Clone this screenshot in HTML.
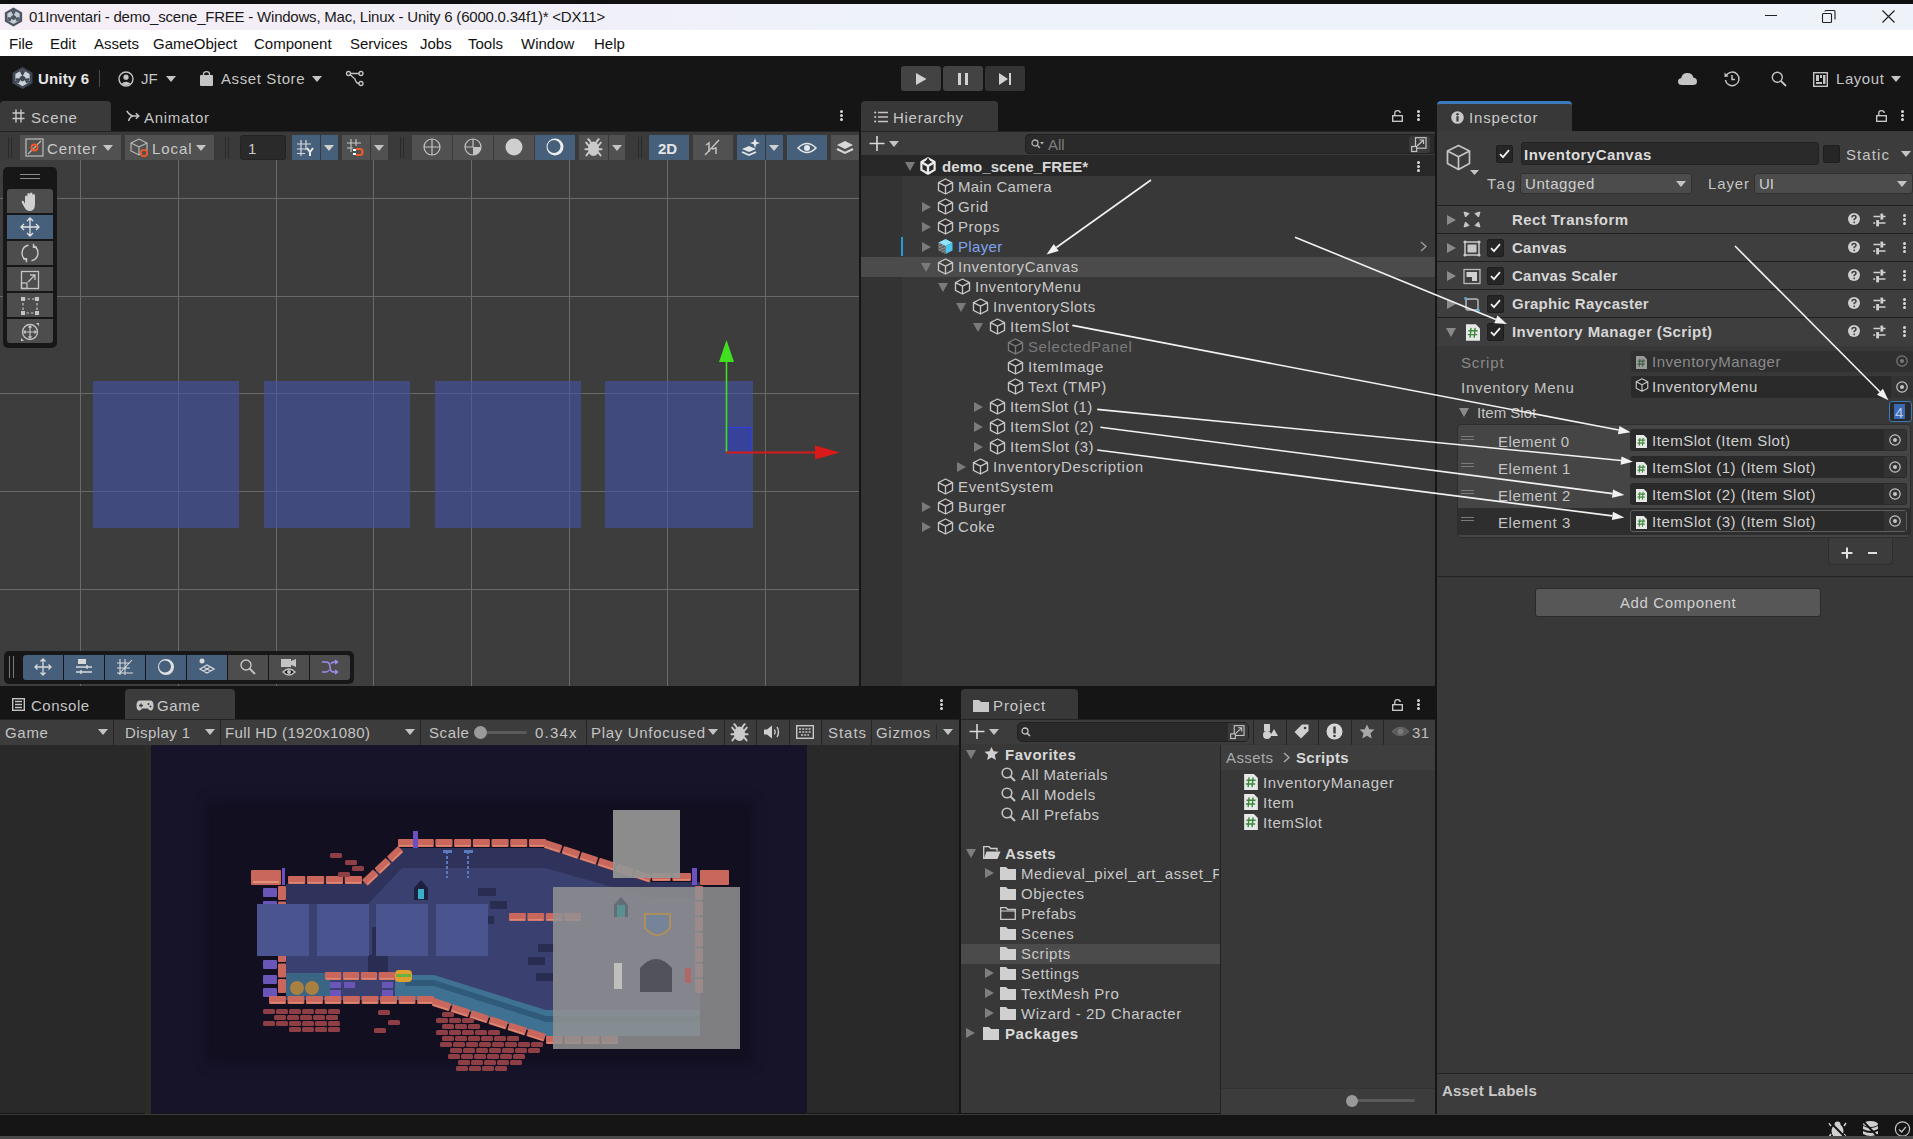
<!DOCTYPE html>
<html><head><meta charset="utf-8">
<style>
*{margin:0;padding:0;box-sizing:border-box}
html,body{width:1913px;height:1139px;overflow:hidden;background:#151515;font-family:"Liberation Sans",sans-serif;}
.a{position:absolute}
.t{position:absolute;white-space:nowrap;color:#c4c4c4;font-size:14px;line-height:16px}
.b{font-weight:bold}
svg{position:absolute;overflow:visible}
</style></head><body>
<!-- top border -->
<div class="a" style="left:0;top:0;width:1913px;height:4px;background:#101010"></div>
<!-- title bar -->
<div class="a" style="left:0;top:4px;width:1913px;height:26px;background:linear-gradient(90deg,#f6eef6 0%,#f2eff7 25%,#eef2fa 45%,#eef3f9 100%)"></div>
<!-- menu bar -->
<div class="a" style="left:0;top:30px;width:1913px;height:26px;background:#ffffff"></div>
<!-- main toolbar -->
<div class="a" style="left:0;top:56px;width:1913px;height:45px;background:#151515"></div>


<!-- title bar content -->
<svg style="left:4px;top:7px" width="19" height="20" viewBox="0 0 20 22"><polygon points="10,0.5 19.5,6 19.5,16 10,21.5 0.5,16 0.5,6" fill="#4c5561"/><path d="M10 3.2 L16.8 7.1 V14.9 L10 18.8 L3.2 14.9 V7.1Z" fill="#c5ccd4"/><path d="M10 3.2 V7.5 M8.2 4.2 L10 7.5 L11.8 4.2 M3.2 14.9 L7 12.4 M3.4 12.2 L7 12.4 L5.6 15.6 M16.8 14.9 L13 12.4 M16.6 12.2 L13 12.4 L14.4 15.6" fill="none" stroke="#4c5561" stroke-width="1.9"/><path d="M10 8.6 L12.6 10.1 V12.9 L10 14.4 L7.4 12.9 V10.1Z" fill="#4c5561"/></svg>
<div class="t" style="left:29px;top:8px;font-size:15px;line-height:17px;letter-spacing:-0.22px;color:#1a1a1a">01Inventari - demo_scene_FREE - Windows, Mac, Linux - Unity 6 (6000.0.34f1)* &lt;DX11&gt;</div>
<div class="a" style="left:1765px;top:15px;width:12px;height:1px;background:#222"></div>
<svg style="left:1822px;top:10px" width="14" height="13" viewBox="0 0 14 13"><rect x="0.5" y="3.5" width="9" height="9" fill="none" stroke="#222" stroke-width="1.1" rx="1"/><path d="M3 1.5 Q3 0.5 4 0.5 L12 0.5 Q13 0.5 13 1.5 L13 9.5" fill="none" stroke="#222" stroke-width="1.1"/></svg>
<svg style="left:1882px;top:10px" width="13" height="13" viewBox="0 0 13 13"><path d="M0.5 0.5 L12.5 12.5 M12.5 0.5 L0.5 12.5" stroke="#222" stroke-width="1.2"/></svg>
<!-- menu -->
<div class="t" style="left:9px;top:35px;font-size:15px;line-height:17px;color:#111">File</div>
<div class="t" style="left:50px;top:35px;font-size:15px;line-height:17px;color:#111">Edit</div>
<div class="t" style="left:94px;top:35px;font-size:15px;line-height:17px;color:#111">Assets</div>
<div class="t" style="left:153px;top:35px;font-size:15px;line-height:17px;color:#111">GameObject</div>
<div class="t" style="left:254px;top:35px;font-size:15px;line-height:17px;color:#111">Component</div>
<div class="t" style="left:350px;top:35px;font-size:15px;line-height:17px;color:#111">Services</div>
<div class="t" style="left:420px;top:35px;font-size:15px;line-height:17px;color:#111">Jobs</div>
<div class="t" style="left:468px;top:35px;font-size:15px;line-height:17px;color:#111">Tools</div>
<div class="t" style="left:521px;top:35px;font-size:15px;line-height:17px;color:#111">Window</div>
<div class="t" style="left:594px;top:35px;font-size:15px;line-height:17px;color:#111">Help</div>
<!-- main toolbar content -->
<svg style="left:12px;top:66px" width="21" height="24" viewBox="0 0 20 22"><polygon points="10,0.5 19.5,6 19.5,16 10,21.5 0.5,16 0.5,6" fill="#3f4852"/><path d="M10 3.2 L16.8 7.1 V14.9 L10 18.8 L3.2 14.9 V7.1Z" fill="#c9d0d8"/><path d="M10 3.2 V7.5 M8.2 4.2 L10 7.5 L11.8 4.2 M3.2 14.9 L7 12.4 M3.4 12.2 L7 12.4 L5.6 15.6 M16.8 14.9 L13 12.4 M16.6 12.2 L13 12.4 L14.4 15.6" fill="none" stroke="#3f4852" stroke-width="1.9"/><path d="M10 8.6 L12.6 10.1 V12.9 L10 14.4 L7.4 12.9 V10.1Z" fill="#3f4852"/></svg>
<div class="t b" style="left:38px;top:70px;font-size:15px;line-height:17px;color:#e6e6e6;letter-spacing:0.17px">Unity 6</div>
<div class="a" style="left:99px;top:70px;width:1px;height:17px;background:#4a4a4a"></div>
<svg style="left:118px;top:71px" width="16" height="16" viewBox="0 0 16 16"><circle cx="8" cy="8" r="7" fill="none" stroke="#c4c4c4" stroke-width="1.4"/><circle cx="8" cy="6.2" r="2.6" fill="#c4c4c4"/><path d="M3.3 12.8 Q8 8.5 12.7 12.8 Q8 16 3.3 12.8Z" fill="#c4c4c4"/></svg>
<div class="t" style="left:141px;top:70px;font-size:15px;line-height:17px;color:#c4c4c4">JF</div>
<svg style="left:166px;top:76px" width="10" height="6" viewBox="0 0 10 6"><polygon points="0,0 10,0 5,6" fill="#c4c4c4"/></svg>
<svg style="left:200px;top:71px" width="13" height="15" viewBox="0 0 13 15"><path d="M3.5 5 L3.5 3 Q3.5 0.7 6.5 0.7 Q9.5 0.7 9.5 3 L9.5 5" fill="none" stroke="#c4c4c4" stroke-width="1.3"/><rect x="0" y="4" width="13" height="11" rx="1" fill="#c4c4c4"/></svg>
<div class="t" style="left:221px;top:70px;font-size:15px;line-height:17px;letter-spacing:0.6px;color:#c4c4c4">Asset Store</div>
<svg style="left:312px;top:76px" width="10" height="6" viewBox="0 0 10 6"><polygon points="0,0 10,0 5,6" fill="#c4c4c4"/></svg>
<svg style="left:346px;top:71px" width="18" height="15" viewBox="0 0 18 15"><circle cx="2.5" cy="2.5" r="2" fill="none" stroke="#c4c4c4" stroke-width="1.3"/><circle cx="15" cy="2.5" r="2" fill="none" stroke="#c4c4c4" stroke-width="1.3"/><circle cx="15" cy="12.5" r="2" fill="none" stroke="#c4c4c4" stroke-width="1.3"/><path d="M4.5 2.5 L13 2.5 M4.2 3.8 L9 8 Q10 12.5 13 12.5" fill="none" stroke="#c4c4c4" stroke-width="1.3"/></svg>
<!-- play controls -->
<div class="a" style="left:901px;top:66px;width:40px;height:25px;background:#434343;border-radius:3px"></div>
<div class="a" style="left:943px;top:66px;width:40px;height:25px;background:#434343;border-radius:3px"></div>
<div class="a" style="left:985px;top:66px;width:40px;height:25px;background:#343434;border-radius:3px"></div>
<svg style="left:916px;top:73px" width="11" height="12" viewBox="0 0 11 12"><polygon points="0,0 10.5,6 0,12" fill="#d0d0d0"/></svg>
<div class="a" style="left:958px;top:73px;width:3px;height:12px;background:#d0d0d0"></div>
<div class="a" style="left:965px;top:73px;width:3px;height:12px;background:#d0d0d0"></div>
<svg style="left:999px;top:73px" width="13" height="12" viewBox="0 0 13 12"><polygon points="0,0 9,6 0,12" fill="#d0d0d0"/><rect x="10" y="0" width="2" height="12" fill="#d0d0d0"/></svg>
<!-- right toolbar icons -->
<svg style="left:1678px;top:72px" width="19" height="13" viewBox="0 0 19 13"><path d="M4 13 Q0 13 0 9.5 Q0 6.5 3.2 6.2 Q4 1 9.5 1 Q14.5 1 15.3 5.5 Q19 6 19 9.5 Q19 13 15 13 Z" fill="#c4c4c4"/></svg>
<svg style="left:1724px;top:71px" width="16" height="16" viewBox="0 0 16 16"><path d="M2.3 4.5 A6.8 6.8 0 1 1 1.5 9" fill="none" stroke="#c4c4c4" stroke-width="1.4"/><polygon points="0.5,1.5 4.5,5.5 0.5,6" fill="#c4c4c4"/><path d="M8 4 L8 8.5 L11 8.5" fill="none" stroke="#c4c4c4" stroke-width="1.5"/></svg>
<svg style="left:1771px;top:71px" width="16" height="16" viewBox="0 0 16 16"><circle cx="6.3" cy="6.3" r="5" fill="none" stroke="#c4c4c4" stroke-width="1.4"/><path d="M10 10 L15 15" stroke="#c4c4c4" stroke-width="1.8"/></svg>
<svg style="left:1813px;top:72px" width="15" height="15" viewBox="0 0 15 15"><rect x="0.7" y="0.7" width="13.6" height="13.6" fill="none" stroke="#c4c4c4" stroke-width="1.4"/><rect x="3" y="3" width="3" height="6" fill="#c4c4c4"/><rect x="7" y="3" width="2" height="3" fill="#c4c4c4"/><rect x="10" y="3" width="2.5" height="9" fill="#c4c4c4"/><rect x="3" y="10" width="6" height="2" fill="#c4c4c4"/></svg>
<div class="t" style="left:1836px;top:70px;font-size:15px;line-height:17px;letter-spacing:0.56px;color:#c4c4c4">Layout</div>
<svg style="left:1891px;top:76px" width="10" height="6" viewBox="0 0 10 6"><polygon points="0,0 10,0 5,6" fill="#c4c4c4"/></svg>

<!-- SCENE PANEL -->
<div id="scene" class="a" style="left:0;top:101px;width:859px;height:585px;background:#151515">
  <div class="a" style="left:0;top:0;width:111px;height:30px;background:#3a3a3a;border-radius:4px 4px 0 0"></div>
  <div class="a" style="left:0;top:30px;width:859px;height:29px;background:#3a3a3a"></div>
  <div class="a" style="left:0;top:59px;width:859px;height:526px;background:#3d3d3d"></div>
</div>

<!-- scene content -->
<svg style="left:12px;top:109px" width="13" height="14" viewBox="0 0 13 14"><path d="M4 0.5 V13.5 M9 0.5 V13.5 M0.5 4 H12.5 M0.5 9.5 H12.5" stroke="#c8c8c8" stroke-width="1.4"/></svg>
<div class="t" style="left:31px;top:109px;font-size:15px;letter-spacing:0.85px;color:#c8c8c8;line-height:17px">Scene</div>
<svg style="left:126px;top:110px" width="14" height="12" viewBox="0 0 14 12"><path d="M0.8 1 Q4 5.5 7 6 L12.5 6 M9.8 3.2 L12.8 6 L9.8 8.8 M7 6 Q4 6.5 2.5 11" fill="none" stroke="#c4c4c4" stroke-width="1.5"/></svg>
<div class="t" style="left:144px;top:109px;font-size:15px;letter-spacing:0.71px;color:#c4c4c4;line-height:17px">Animator</div>
<div class="a" style="left:840px;top:110px;width:3px;height:3px;border-radius:2px;background:#d8d8d8"></div><div class="a" style="left:840px;top:114px;width:3px;height:3px;border-radius:2px;background:#d8d8d8"></div><div class="a" style="left:840px;top:118px;width:3px;height:3px;border-radius:2px;background:#d8d8d8"></div>
<div class="a" style="left:0;top:131px;width:859px;height:1px;background:#232323"></div>
<div class="a" style="left:8px;top:137px;width:1px;height:21px;background:#2a2a2a"></div><div class="a" style="left:11px;top:137px;width:1px;height:21px;background:#2a2a2a"></div>
<div class="a" style="left:225px;top:137px;width:1px;height:21px;background:#2a2a2a"></div><div class="a" style="left:228px;top:137px;width:1px;height:21px;background:#2a2a2a"></div>
<div class="a" style="left:400px;top:137px;width:1px;height:21px;background:#2a2a2a"></div><div class="a" style="left:403px;top:137px;width:1px;height:21px;background:#2a2a2a"></div>
<div class="a" style="left:638px;top:137px;width:1px;height:21px;background:#2a2a2a"></div><div class="a" style="left:641px;top:137px;width:1px;height:21px;background:#2a2a2a"></div>
<div class="a" style="left:20px;top:135px;width:101px;height:25px;background:#515151;"></div>
<svg style="left:25px;top:138px" width="19" height="19" viewBox="0 0 19 19"><rect x="1" y="1" width="17" height="17" fill="none" stroke="#bdbdbd" stroke-width="1.2"/><path d="M3 16 L16 3" stroke="#bdbdbd" stroke-width="1.1"/><circle cx="9.5" cy="9.5" r="3" fill="none" stroke="#f05a28" stroke-width="1.8"/></svg>
<div class="t" style="left:47px;top:140px;font-size:15px;letter-spacing:0.9px;color:#c8c8c8;line-height:17px">Center</div>
<svg style="left:103px;top:145px" width="10" height="6" viewBox="0 0 10 6"><polygon points="0,0 10,0 5,6" fill="#c4c4c4"/></svg>
<div class="a" style="left:125px;top:135px;width:89px;height:25px;background:#515151;"></div>
<svg style="left:130px;top:138px" width="20" height="20" viewBox="0 0 20 20"><path d="M1 5 L9 1 L17 5 L17 13 L9 17 L1 13 Z M1 5 L9 9 L17 5 M9 9 L9 17" fill="none" stroke="#bdbdbd" stroke-width="1.1"/><circle cx="14" cy="15" r="3.2" fill="#515151" stroke="#f05a28" stroke-width="1.8"/></svg>
<div class="t" style="left:152px;top:140px;font-size:15px;letter-spacing:0.95px;color:#c8c8c8;line-height:17px">Local</div>
<svg style="left:196px;top:145px" width="10" height="6" viewBox="0 0 10 6"><polygon points="0,0 10,0 5,6" fill="#c4c4c4"/></svg>
<div class="a" style="left:240px;top:135px;width:46px;height:25px;background:#2a2a2a;border-radius:3px;border:1px solid #232323"></div>
<div class="t" style="left:248px;top:140px;font-size:15px;color:#c8c8c8;line-height:17px">1</div>
<div class="a" style="left:292px;top:135px;width:28px;height:25px;background:#46607c;"></div>
<div class="a" style="left:321px;top:135px;width:17px;height:25px;background:#46607c;"></div>
<svg style="left:297px;top:140px" width="18" height="16" viewBox="0 0 18 16"><path d="M4 0 V16 M9 0 V10 M0 4 H14 M0 9 H9 M0 13.5 H8" stroke="#d8d8d8" stroke-width="1.2"/><path d="M10 8 L13 12 L16 8 M13 12 V16" fill="none" stroke="#e8e8e8" stroke-width="2"/></svg>
<svg style="left:324px;top:145px" width="10" height="6" viewBox="0 0 10 6"><polygon points="0,0 10,0 5,6" fill="#d0d0d0"/></svg>
<div class="a" style="left:342px;top:135px;width:28px;height:25px;background:#515151;"></div>
<div class="a" style="left:371px;top:135px;width:17px;height:25px;background:#515151;"></div>
<svg style="left:347px;top:139px" width="18" height="17" viewBox="0 0 18 17"><path d="M4 0 V13 M9 0 V7 M0 4 H14 M0 9 H6" stroke="#c8c8c8" stroke-width="1.1"/><rect x="6" y="10" width="3" height="2" fill="#fff"/><rect x="6" y="14" width="3" height="2" fill="#fff"/><path d="M9 10 H13 Q15.5 10 15.5 13 Q15.5 16 13 16 H9" fill="none" stroke="#f05a28" stroke-width="2.2"/></svg>
<svg style="left:374px;top:145px" width="10" height="6" viewBox="0 0 10 6"><polygon points="0,0 10,0 5,6" fill="#c4c4c4"/></svg>
<div class="a" style="left:412px;top:135px;width:40px;height:25px;background:#515151;"></div>
<div class="a" style="left:453px;top:135px;width:40px;height:25px;background:#515151;"></div>
<div class="a" style="left:494px;top:135px;width:40px;height:25px;background:#515151;"></div>
<div class="a" style="left:535px;top:135px;width:40px;height:25px;background:#46607c;"></div>
<div class="a" style="left:452px;top:135px;width:1px;height:25px;background:#3c3c3c"></div><div class="a" style="left:493px;top:135px;width:1px;height:25px;background:#3c3c3c"></div><div class="a" style="left:534px;top:135px;width:1px;height:25px;background:#3c3c3c"></div>
<svg style="left:423px;top:138px" width="18" height="18" viewBox="0 0 18 18"><circle cx="9" cy="9" r="8" fill="none" stroke="#c4c4c4" stroke-width="1.2"/><path d="M1 9 H17 M9 1 V17" stroke="#c4c4c4" stroke-width="1.2"/></svg>
<svg style="left:464px;top:138px" width="18" height="18" viewBox="0 0 18 18"><circle cx="9" cy="9" r="8" fill="none" stroke="#c4c4c4" stroke-width="1.2"/><path d="M1 9 H9 V1" fill="none" stroke="#c4c4c4" stroke-width="1.2"/><path d="M9 9 H17 A8 8 0 0 1 9 17 Z" fill="#c4c4c4"/></svg>
<svg style="left:505px;top:138px" width="18" height="18" viewBox="0 0 18 18"><circle cx="9" cy="9" r="8.5" fill="#cfcfcf"/></svg>
<svg style="left:546px;top:138px" width="18" height="18" viewBox="0 0 18 18"><path fill-rule="evenodd" d="M9 0.5 A8.5 8.5 0 1 1 9 17.5 A8.5 8.5 0 1 1 9 0.5Z M8 2 A6.5 6.5 0 1 0 8 15 A6.5 6.5 0 1 0 8 2Z" fill="#ececec"/></svg>
<div class="a" style="left:579px;top:135px;width:29px;height:25px;background:#515151;"></div>
<div class="a" style="left:609px;top:135px;width:16px;height:25px;background:#515151;"></div>
<svg style="left:584px;top:137px" width="19" height="20" viewBox="0 0 19 20"><ellipse cx="9.5" cy="11.8" rx="5.6" ry="7.2" fill="#cacaca"/><path d="M6.6 5.2 Q5.3 2.8 4.2 2.2 M12.4 5.2 Q13.7 2.8 14.8 2.2 M4.6 8.6 L2.2 5.6 M14.4 8.6 L16.8 5.6 M4.2 12.2 L1.4 12.2 M14.8 12.2 L17.6 12.2 M4.6 15.6 L2.4 18.4 M14.4 15.6 L16.6 18.4" fill="none" stroke="#cacaca" stroke-width="1.9" stroke-linecap="round"/></svg>
<svg style="left:612px;top:145px" width="10" height="6" viewBox="0 0 10 6"><polygon points="0,0 10,0 5,6" fill="#c4c4c4"/></svg>
<div class="a" style="left:649px;top:135px;width:40px;height:25px;background:#46607c;"></div>
<div class="t b" style="left:658px;top:140px;font-size:15px;color:#e4e4e4;line-height:17px">2D</div>
<div class="a" style="left:693px;top:135px;width:40px;height:25px;background:#515151;"></div>
<svg style="left:703px;top:139px" width="18" height="17" viewBox="0 0 18 17"><path d="M2 16 L16 1" stroke="#c4c4c4" stroke-width="1.4"/><path d="M3 6 L6 4 L6 13 M9 10 L13 9 L13 15" fill="none" stroke="#c4c4c4" stroke-width="1.5"/></svg>
<div class="a" style="left:737px;top:135px;width:28px;height:25px;background:#46607c;"></div>
<div class="a" style="left:766px;top:135px;width:17px;height:25px;background:#46607c;"></div>
<svg style="left:741px;top:138px" width="20" height="18" viewBox="0 0 20 18"><path d="M1 11 L8 8 L15 11 L8 14 Z" fill="#e6e6e6"/><path d="M1 14 L8 17 L15 14" fill="none" stroke="#e6e6e6" stroke-width="1.8"/><path d="M14 0 L15.3 3.7 L19 5 L15.3 6.3 L14 10 L12.7 6.3 L9 5 L12.7 3.7Z" fill="#e6e6e6"/></svg>
<svg style="left:769px;top:145px" width="10" height="6" viewBox="0 0 10 6"><polygon points="0,0 10,0 5,6" fill="#d0d0d0"/></svg>
<div class="a" style="left:787px;top:135px;width:40px;height:25px;background:#46607c;"></div>
<svg style="left:797px;top:142px" width="20" height="12" viewBox="0 0 20 12"><path d="M1 6 Q10 -3 19 6 Q10 15 1 6Z" fill="none" stroke="#e6e6e6" stroke-width="1.6"/><circle cx="10" cy="6" r="3" fill="#e6e6e6"/></svg>
<div class="a" style="left:831px;top:135px;width:28px;height:25px;background:#515151;"></div>
<svg style="left:836px;top:140px" width="18" height="15" viewBox="0 0 18 15"><path d="M1 5 L9 1 L17 5 L9 9Z" fill="#d8d8d8"/><path d="M1 9 L9 13 L17 9" fill="none" stroke="#d8d8d8" stroke-width="2"/></svg>
<div class="a" style="left:80px;top:160px;width:1px;height:526px;background:#696969"></div>
<div class="a" style="left:178px;top:160px;width:1px;height:526px;background:#696969"></div>
<div class="a" style="left:276px;top:160px;width:1px;height:526px;background:#696969"></div>
<div class="a" style="left:373px;top:160px;width:1px;height:526px;background:#696969"></div>
<div class="a" style="left:471px;top:160px;width:1px;height:526px;background:#696969"></div>
<div class="a" style="left:569px;top:160px;width:1px;height:526px;background:#696969"></div>
<div class="a" style="left:667px;top:160px;width:1px;height:526px;background:#696969"></div>
<div class="a" style="left:765px;top:160px;width:1px;height:526px;background:#696969"></div>
<div class="a" style="left:0;top:198px;width:859px;height:1px;background:#696969"></div>
<div class="a" style="left:0;top:296px;width:859px;height:1px;background:#696969"></div>
<div class="a" style="left:0;top:393px;width:859px;height:1px;background:#696969"></div>
<div class="a" style="left:0;top:491px;width:859px;height:1px;background:#696969"></div>
<div class="a" style="left:0;top:589px;width:859px;height:1px;background:#696969"></div>
<div class="a" style="left:93px;top:381px;width:146px;height:147px;background:rgba(68,83,166,0.6)"></div>
<div class="a" style="left:264px;top:381px;width:146px;height:147px;background:rgba(68,83,166,0.6)"></div>
<div class="a" style="left:435px;top:381px;width:146px;height:147px;background:rgba(68,83,166,0.6)"></div>
<div class="a" style="left:605px;top:381px;width:148px;height:147px;background:rgba(68,83,166,0.6)"></div>
<svg style="left:0;top:0" width="859" height="686"><rect x="726.5" y="427.5" width="25" height="25" fill="rgba(40,55,200,0.4)" stroke="#3040e0" stroke-width="1"/><line x1="726.5" y1="360" x2="726.5" y2="452" stroke="#40e020" stroke-width="1.6"/><polygon points="726.5,340 719,362 734,362" fill="#40e020"/><line x1="726" y1="452.5" x2="818" y2="452.5" stroke="#d81a1a" stroke-width="1.8"/><polygon points="840,452.5 815,445.5 815,459.5" fill="#d81a1a"/></svg>
<div class="a" style="left:3px;top:167px;width:54px;height:181px;background:#171717;border-radius:5px"></div>
<div class="a" style="left:20px;top:174px;width:20px;height:1px;background:#8a8a8a"></div><div class="a" style="left:20px;top:178px;width:20px;height:1px;background:#8a8a8a"></div>
<div class="a" style="left:7px;top:189px;width:46px;height:24px;background:#4d4d4d;border-radius:3px 3px 0 0"></div>
<div class="a" style="left:7px;top:215px;width:46px;height:24px;background:#46607c;border-radius:0"></div>
<div class="a" style="left:7px;top:241px;width:46px;height:24px;background:#4d4d4d;border-radius:0"></div>
<div class="a" style="left:7px;top:267px;width:46px;height:24px;background:#4d4d4d;border-radius:0"></div>
<div class="a" style="left:7px;top:293px;width:46px;height:24px;background:#4d4d4d;border-radius:0"></div>
<div class="a" style="left:7px;top:319px;width:46px;height:24px;background:#4d4d4d;border-radius:0 0 3px 3px"></div>
<svg style="left:20px;top:192px" width="20" height="20" viewBox="0 0 20 20"><path d="M5 12 L5 5 Q5 3.5 6.2 3.5 Q7.3 3.5 7.3 5 L7.3 9 L7.3 2.5 Q7.3 1 8.6 1 Q9.9 1 9.9 2.5 L9.9 9 L9.9 2 Q9.9 0.5 11.2 0.5 Q12.5 0.5 12.5 2 L12.5 9 L12.5 3.5 Q12.5 2 13.7 2 Q15 2 15 3.5 L15 12 Q15 19 10 19 Q6.5 19 4.5 15.5 L1.8 10.5 Q1.2 9.2 2.3 8.8 Q3.4 8.5 4 9.7 Z" fill="#d0d0d0"/></svg>
<svg style="left:20px;top:217px" width="20" height="20" viewBox="0 0 20 20"><path d="M10 1 V19 M1 10 H19 M7 4 L10 1 L13 4 M7 16 L10 19 L13 16 M4 7 L1 10 L4 13 M16 7 L19 10 L16 13" fill="none" stroke="#e0e0e0" stroke-width="1.3"/></svg>
<svg style="left:20px;top:243px" width="20" height="20" viewBox="0 0 20 20"><path d="M8.5 2.3 A7.8 7.8 0 0 0 6.5 17 M11.5 17.7 A7.8 7.8 0 0 0 13.5 3" fill="none" stroke="#c8c8c8" stroke-width="1.4"/><path d="M13.5 0.8 V4.2 H17 M6.5 19.2 V15.8 H3" fill="none" stroke="#c8c8c8" stroke-width="1.4"/></svg>
<svg style="left:20px;top:270px" width="20" height="20" viewBox="0 0 20 20"><rect x="1.5" y="1.5" width="17" height="17" fill="none" stroke="#c4c4c4" stroke-width="1.3"/><rect x="1.5" y="13" width="5.5" height="5.5" fill="none" stroke="#c4c4c4" stroke-width="1.3"/><path d="M8 12 L15 5 M10 5 H15 V10" fill="none" stroke="#c4c4c4" stroke-width="1.3"/></svg>
<svg style="left:20px;top:296px" width="20" height="20" viewBox="0 0 20 20"><rect x="3" y="3" width="14" height="14" fill="none" stroke="#c4c4c4" stroke-width="1.2" stroke-dasharray="2.5 2"/><rect x="1" y="1" width="4" height="4" fill="#c4c4c4"/><rect x="15" y="1" width="4" height="4" fill="#c4c4c4"/><rect x="1" y="15" width="4" height="4" fill="#c4c4c4"/><rect x="15" y="15" width="4" height="4" fill="#c4c4c4"/></svg>
<svg style="left:20px;top:322px" width="20" height="20" viewBox="0 0 20 20"><circle cx="10" cy="10" r="7.5" fill="none" stroke="#c4c4c4" stroke-width="1.3"/><path d="M10 4 V16 M4 10 H16 M8.5 5.5 L10 4 L11.5 5.5 M8.5 14.5 L10 16 L11.5 14.5 M5.5 8.5 L4 10 L5.5 11.5 M14.5 8.5 L16 10 L14.5 11.5" fill="none" stroke="#c4c4c4" stroke-width="1.2"/><path d="M1 19 L4 19 L1 16Z M19 1 L16 1 L19 4Z" fill="#c4c4c4"/></svg>
<div class="a" style="left:4px;top:651px;width:350px;height:33px;background:#171717;border-radius:5px"></div>
<div class="a" style="left:9px;top:656px;width:1px;height:22px;background:#7a7a7a"></div><div class="a" style="left:13px;top:656px;width:1px;height:22px;background:#7a7a7a"></div>
<div class="a" style="left:23px;top:655px;width:40px;height:25px;background:#46607c;border-radius:3px 0 0 3px"></div>
<div class="a" style="left:64px;top:655px;width:40px;height:25px;background:#46607c;border-radius:0"></div>
<div class="a" style="left:105px;top:655px;width:40px;height:25px;background:#46607c;border-radius:0"></div>
<div class="a" style="left:146px;top:655px;width:40px;height:25px;background:#46607c;border-radius:0"></div>
<div class="a" style="left:187px;top:655px;width:40px;height:25px;background:#46607c;border-radius:0"></div>
<div class="a" style="left:228px;top:655px;width:40px;height:25px;background:#4d4d4d;border-radius:0"></div>
<div class="a" style="left:269px;top:655px;width:40px;height:25px;background:#4d4d4d;border-radius:0"></div>
<div class="a" style="left:310px;top:655px;width:40px;height:25px;background:#4d4d4d;border-radius:0 3px 3px 0"></div>
<svg style="left:34px;top:658px" width="18" height="18" viewBox="0 0 18 18"><path d="M9 1 V17 M1 9 H17 M6.5 3.5 L9 1 L11.5 3.5 M6.5 14.5 L9 17 L11.5 14.5 M3.5 6.5 L1 9 L3.5 11.5 M14.5 6.5 L17 9 L14.5 11.5" fill="none" stroke="#d8d8d8" stroke-width="1.3"/></svg>
<svg style="left:75px;top:658px" width="18" height="18" viewBox="0 0 18 18"><rect x="3" y="1" width="8" height="5" fill="#d8d8d8"/><path d="M1 9 H17 M1 14 H17 M12 7 V11 M6 12 V16" stroke="#d8d8d8" stroke-width="1.4"/></svg>
<svg style="left:116px;top:658px" width="18" height="18" viewBox="0 0 18 18"><path d="M4 1 V17 M9 1 V17 M1 5 H14 M1 10 H14 M1 15 H17 M3 16 L16 2" stroke="#d8d8d8" stroke-width="1.1"/></svg>
<svg style="left:157px;top:658px" width="18" height="18" viewBox="0 0 18 18"><path fill-rule="evenodd" d="M9 1 A8 8 0 1 1 9 17 A8 8 0 1 1 9 1Z M8 2.5 A6 6 0 1 0 8 14.5 A6 6 0 1 0 8 2.5Z" fill="#e0e0e0"/></svg>
<svg style="left:198px;top:658px" width="18" height="18" viewBox="0 0 18 18"><circle cx="4" cy="3" r="2.5" fill="#d8d8d8"/><path d="M2 11 L9 7 L16 11 L9 15Z M5.5 9 L12.5 13 M12.5 9 L5.5 13" fill="none" stroke="#d8d8d8" stroke-width="1.3"/></svg>
<svg style="left:239px;top:658px" width="18" height="18" viewBox="0 0 18 18"><circle cx="7" cy="7" r="5" fill="none" stroke="#c4c4c4" stroke-width="1.4"/><path d="M10.5 10.5 L16 16" stroke="#c4c4c4" stroke-width="1.8"/></svg>
<svg style="left:280px;top:658px" width="18" height="18" viewBox="0 0 18 18"><rect x="1" y="1" width="10" height="8" fill="#c4c4c4"/><path d="M11 3 L16 1 V9 L11 7Z" fill="#c4c4c4"/><path d="M3 14 Q9 8 15 14 Q9 20 3 14Z" fill="#171717" stroke="#c4c4c4" stroke-width="1.4"/><circle cx="9" cy="14" r="2" fill="#c4c4c4"/></svg>
<svg style="left:321px;top:658px" width="18" height="18" viewBox="0 0 18 18"><path d="M1 4 H5 Q9 4 9 9 Q9 14 13 14 H16 M1 14 H5 Q7 14 8 12 M10 6 Q11 4 13 4 H16 M14 2 L16.5 4 L14 6 M14 12 L16.5 14 L14 16" fill="none" stroke="#a28cf0" stroke-width="1.5"/></svg>
<!-- HIERARCHY PANEL -->
<div id="hier" class="a" style="left:861px;top:101px;width:574px;height:585px;background:#151515">
  <div class="a" style="left:0;top:0;width:137px;height:30px;background:#383838;border-radius:4px 4px 0 0"></div>
  <div class="a" style="left:0;top:30px;width:574px;height:25px;background:#3c3c3c"></div>
  <div class="a" style="left:0;top:55px;width:574px;height:20px;background:#2a2a2a"></div>
  <div class="a" style="left:0;top:75px;width:574px;height:510px;background:#383838"></div>
</div>

<!-- INSPECTOR PANEL -->
<div id="insp" class="a" style="left:1437px;top:101px;width:476px;height:1013px;background:#151515">
  <div class="a" style="left:0;top:0;width:135px;height:30px;background:#383838;border-radius:4px 4px 0 0;border-top:3px solid #3a79bb"></div>
  <div class="a" style="left:0;top:30px;width:476px;height:983px;background:#383838"></div>
</div>

<!-- hier+insp content -->
<svg style="left:874px;top:111px" width="14" height="12" viewBox="0 0 14 12"><path d="M4 1.5 H14 M4 6 H14 M4 10.5 H14" stroke="#c4c4c4" stroke-width="1.4"/><circle cx="1.2" cy="1.5" r="1.1" fill="#c4c4c4"/><circle cx="1.2" cy="6" r="1.1" fill="#c4c4c4"/><circle cx="1.2" cy="10.5" r="1.1" fill="#c4c4c4"/></svg>
<div class="t" style="left:893px;top:109px;font-size:15px;letter-spacing:0.72px;color:#c8c8c8;line-height:17px">Hierarchy</div>
<svg style="left:1392px;top:110px" width="11" height="12" viewBox="0 0 11 12"><rect x="0.7" y="5.7" width="9.6" height="5.6" fill="none" stroke="#d0d0d0" stroke-width="1.3"/><path d="M2.8 5.5 V3.2 Q2.8 0.7 5.5 0.7 Q8.2 0.7 8.2 3" fill="none" stroke="#d0d0d0" stroke-width="1.3"/></svg>
<div class="a" style="left:1417px;top:110px;width:3px;height:3px;border-radius:2px;background:#d8d8d8"></div><div class="a" style="left:1417px;top:114px;width:3px;height:3px;border-radius:2px;background:#d8d8d8"></div><div class="a" style="left:1417px;top:118px;width:3px;height:3px;border-radius:2px;background:#d8d8d8"></div>
<div class="a" style="left:861px;top:131px;width:574px;height:1px;background:#232323"></div>
<svg style="left:869px;top:136px" width="16" height="15" viewBox="0 0 16 15"><path d="M8 0 V15 M0.5 7.5 H15.5" stroke="#d8d8d8" stroke-width="1.6"/></svg>
<svg style="left:889px;top:141px" width="10" height="6" viewBox="0 0 10 6"><polygon points="0,0 10,0 5,6" fill="#c4c4c4"/></svg>
<div class="a" style="left:1025px;top:134px;width:410px;height:20px;background:#2a2a2a;border-radius:4px 0 0 4px;border:1px solid #212121"></div>
<svg style="left:1031px;top:139px" width="13" height="10" viewBox="0 0 13 10"><circle cx="4" cy="4" r="3" fill="none" stroke="#b0b0b0" stroke-width="1.3"/><path d="M6.2 6.2 L9 9" stroke="#b0b0b0" stroke-width="1.5"/><polygon points="9,3 13,3 11,5.5" fill="#b0b0b0"/></svg>
<div class="t" style="left:1048px;top:136px;font-size:15px;color:#7e7e7e;line-height:17px">All</div>
<div class="a" style="left:1409px;top:136px;width:21px;height:17px;background:#3a3a3a;border-radius:3px"></div>
<svg style="left:1411px;top:137px" width="16" height="15" viewBox="0 0 16 15"><rect x="4.5" y="0.7" width="10.5" height="10.5" fill="none" stroke="#c4c4c4" stroke-width="1.2"/><rect x="0.7" y="9.5" width="5" height="5" fill="#3a3a3a" stroke="#c4c4c4" stroke-width="1.2"/><path d="M6 9 L12.5 3 M8.5 3 H12.5 V7" fill="none" stroke="#c4c4c4" stroke-width="1.2"/></svg>
<div class="a" style="left:861px;top:155px;width:574px;height:21px;background:#282828"></div>
<svg style="left:905px;top:162px" width="10" height="9" viewBox="0 0 10 9"><polygon points="0,0 10,0 5,9" fill="#7a7a7a"/></svg>
<svg style="left:920px;top:157px" width="16" height="18" viewBox="0 0 16 18"><path d="M8 1.3 L14.6 5 V12.9 L8 16.7 L1.4 12.9 V5Z" fill="none" stroke="#ececec" stroke-width="2.2" stroke-linejoin="round"/><path d="M8 9 V16.5 M8 9 L1.6 5.2 M8 9 L14.4 5.2" stroke="#ececec" stroke-width="2.4"/><path d="M8 0.5 L10.2 4.2 H8.9 V7 H7.1 V4.2 H5.8Z" fill="#282828"/></svg>
<div class="t b" style="left:942px;top:158px;font-size:15px;line-height:17px;letter-spacing:0.07px;color:#d8d8d8">demo_scene_FREE*</div>
<div class="a" style="left:1417px;top:161px;width:3px;height:3px;border-radius:2px;background:#d8d8d8"></div><div class="a" style="left:1417px;top:165px;width:3px;height:3px;border-radius:2px;background:#d8d8d8"></div><div class="a" style="left:1417px;top:169px;width:3px;height:3px;border-radius:2px;background:#d8d8d8"></div>
<div class="a" style="left:861px;top:176px;width:41px;height:510px;background:#333333"></div>
<div class="a" style="left:861px;top:257px;width:574px;height:20px;background:#4b4b4b"></div>
<div class="a" style="left:901px;top:237px;width:2px;height:19px;background:#2a9ad8"></div>
<svg style="left:937px;top:178px" width="17" height="17" viewBox="0 0 17 17"><path d="M8.5 1 L15.5 4.6 L15.5 12.4 L8.5 16 L1.5 12.4 L1.5 4.6 Z" fill="rgba(0,0,0,0.18)"/><path d="M8.5 1 L15.5 4.6 L15.5 12.4 L8.5 16 L1.5 12.4 L1.5 4.6 Z M1.5 4.6 L8.5 8.2 L15.5 4.6 M8.5 8.2 V16" fill="none" stroke="#c4c4c4" stroke-width="1.4" stroke-linejoin="round"/></svg>
<div class="t" style="left:958px;top:178px;font-size:15px;line-height:17px;letter-spacing:0.35px;color:#c8c8c8">Main Camera</div>
<svg style="left:922px;top:202px" width="9" height="10" viewBox="0 0 9 10"><polygon points="0,0 9,5 0,10" fill="#7a7a7a"/></svg>
<svg style="left:937px;top:198px" width="17" height="17" viewBox="0 0 17 17"><path d="M8.5 1 L15.5 4.6 L15.5 12.4 L8.5 16 L1.5 12.4 L1.5 4.6 Z" fill="rgba(0,0,0,0.18)"/><path d="M8.5 1 L15.5 4.6 L15.5 12.4 L8.5 16 L1.5 12.4 L1.5 4.6 Z M1.5 4.6 L8.5 8.2 L15.5 4.6 M8.5 8.2 V16" fill="none" stroke="#c4c4c4" stroke-width="1.4" stroke-linejoin="round"/></svg>
<div class="t" style="left:958px;top:198px;font-size:15px;line-height:17px;letter-spacing:0.55px;color:#c8c8c8">Grid</div>
<svg style="left:922px;top:222px" width="9" height="10" viewBox="0 0 9 10"><polygon points="0,0 9,5 0,10" fill="#7a7a7a"/></svg>
<svg style="left:937px;top:218px" width="17" height="17" viewBox="0 0 17 17"><path d="M8.5 1 L15.5 4.6 L15.5 12.4 L8.5 16 L1.5 12.4 L1.5 4.6 Z" fill="rgba(0,0,0,0.18)"/><path d="M8.5 1 L15.5 4.6 L15.5 12.4 L8.5 16 L1.5 12.4 L1.5 4.6 Z M1.5 4.6 L8.5 8.2 L15.5 4.6 M8.5 8.2 V16" fill="none" stroke="#c4c4c4" stroke-width="1.4" stroke-linejoin="round"/></svg>
<div class="t" style="left:958px;top:218px;font-size:15px;line-height:17px;letter-spacing:0.55px;color:#c8c8c8">Props</div>
<svg style="left:922px;top:242px" width="9" height="10" viewBox="0 0 9 10"><polygon points="0,0 9,5 0,10" fill="#7a7a7a"/></svg>
<svg style="left:937px;top:238px" width="17" height="17" viewBox="0 0 17 17"><path d="M8.5 1 L15.5 4.6 L8.5 8.2 L1.5 4.6Z" fill="#8fe4ff"/><path d="M15.5 4.6 L15.5 12.4 L8.5 16 L8.5 8.2Z" fill="#4cc4f0"/><path d="M1.5 4.6 L8.5 8.2 L8.5 16 L1.5 12.4Z" fill="#8a8a8a"/><path d="M2 8 L5 6.5 M2 11 L8 8 M3 13.5 L8 11 M5.5 15 L8 13.8" stroke="#5a5a5a" stroke-width="1.2"/></svg>
<div class="t" style="left:958px;top:238px;font-size:15px;line-height:17px;letter-spacing:0.35px;color:#7ea4f0">Player</div>
<svg style="left:921px;top:263px" width="10" height="9" viewBox="0 0 10 9"><polygon points="0,0 10,0 5,9" fill="#7a7a7a"/></svg>
<svg style="left:937px;top:258px" width="17" height="17" viewBox="0 0 17 17"><path d="M8.5 1 L15.5 4.6 L15.5 12.4 L8.5 16 L1.5 12.4 L1.5 4.6 Z" fill="rgba(0,0,0,0.18)"/><path d="M8.5 1 L15.5 4.6 L15.5 12.4 L8.5 16 L1.5 12.4 L1.5 4.6 Z M1.5 4.6 L8.5 8.2 L15.5 4.6 M8.5 8.2 V16" fill="none" stroke="#c4c4c4" stroke-width="1.4" stroke-linejoin="round"/></svg>
<div class="t" style="left:958px;top:258px;font-size:15px;line-height:17px;letter-spacing:0.55px;color:#c8c8c8">InventoryCanvas</div>
<svg style="left:938px;top:283px" width="10" height="9" viewBox="0 0 10 9"><polygon points="0,0 10,0 5,9" fill="#7a7a7a"/></svg>
<svg style="left:954px;top:278px" width="17" height="17" viewBox="0 0 17 17"><path d="M8.5 1 L15.5 4.6 L15.5 12.4 L8.5 16 L1.5 12.4 L1.5 4.6 Z" fill="rgba(0,0,0,0.18)"/><path d="M8.5 1 L15.5 4.6 L15.5 12.4 L8.5 16 L1.5 12.4 L1.5 4.6 Z M1.5 4.6 L8.5 8.2 L15.5 4.6 M8.5 8.2 V16" fill="none" stroke="#c4c4c4" stroke-width="1.4" stroke-linejoin="round"/></svg>
<div class="t" style="left:975px;top:278px;font-size:15px;line-height:17px;letter-spacing:0.55px;color:#c8c8c8">InventoryMenu</div>
<svg style="left:956px;top:303px" width="10" height="9" viewBox="0 0 10 9"><polygon points="0,0 10,0 5,9" fill="#7a7a7a"/></svg>
<svg style="left:972px;top:298px" width="17" height="17" viewBox="0 0 17 17"><path d="M8.5 1 L15.5 4.6 L15.5 12.4 L8.5 16 L1.5 12.4 L1.5 4.6 Z" fill="rgba(0,0,0,0.18)"/><path d="M8.5 1 L15.5 4.6 L15.5 12.4 L8.5 16 L1.5 12.4 L1.5 4.6 Z M1.5 4.6 L8.5 8.2 L15.5 4.6 M8.5 8.2 V16" fill="none" stroke="#c4c4c4" stroke-width="1.4" stroke-linejoin="round"/></svg>
<div class="t" style="left:993px;top:298px;font-size:15px;line-height:17px;letter-spacing:0.55px;color:#c8c8c8">InventorySlots</div>
<svg style="left:973px;top:323px" width="10" height="9" viewBox="0 0 10 9"><polygon points="0,0 10,0 5,9" fill="#7a7a7a"/></svg>
<svg style="left:989px;top:318px" width="17" height="17" viewBox="0 0 17 17"><path d="M8.5 1 L15.5 4.6 L15.5 12.4 L8.5 16 L1.5 12.4 L1.5 4.6 Z" fill="rgba(0,0,0,0.18)"/><path d="M8.5 1 L15.5 4.6 L15.5 12.4 L8.5 16 L1.5 12.4 L1.5 4.6 Z M1.5 4.6 L8.5 8.2 L15.5 4.6 M8.5 8.2 V16" fill="none" stroke="#c4c4c4" stroke-width="1.4" stroke-linejoin="round"/></svg>
<div class="t" style="left:1010px;top:318px;font-size:15px;line-height:17px;letter-spacing:0.55px;color:#c8c8c8">ItemSlot</div>
<svg style="left:1007px;top:338px" width="17" height="17" viewBox="0 0 17 17"><path d="M8.5 1 L15.5 4.6 L15.5 12.4 L8.5 16 L1.5 12.4 L1.5 4.6 Z" fill="rgba(0,0,0,0.18)"/><path d="M8.5 1 L15.5 4.6 L15.5 12.4 L8.5 16 L1.5 12.4 L1.5 4.6 Z M1.5 4.6 L8.5 8.2 L15.5 4.6 M8.5 8.2 V16" fill="none" stroke="#7a7a7a" stroke-width="1.4" stroke-linejoin="round"/></svg>
<div class="t" style="left:1028px;top:338px;font-size:15px;line-height:17px;letter-spacing:0.59px;color:#7a7a7a">SelectedPanel</div>
<svg style="left:1007px;top:358px" width="17" height="17" viewBox="0 0 17 17"><path d="M8.5 1 L15.5 4.6 L15.5 12.4 L8.5 16 L1.5 12.4 L1.5 4.6 Z" fill="rgba(0,0,0,0.18)"/><path d="M8.5 1 L15.5 4.6 L15.5 12.4 L8.5 16 L1.5 12.4 L1.5 4.6 Z M1.5 4.6 L8.5 8.2 L15.5 4.6 M8.5 8.2 V16" fill="none" stroke="#c4c4c4" stroke-width="1.4" stroke-linejoin="round"/></svg>
<div class="t" style="left:1028px;top:358px;font-size:15px;line-height:17px;letter-spacing:0.55px;color:#c8c8c8">ItemImage</div>
<svg style="left:1007px;top:378px" width="17" height="17" viewBox="0 0 17 17"><path d="M8.5 1 L15.5 4.6 L15.5 12.4 L8.5 16 L1.5 12.4 L1.5 4.6 Z" fill="rgba(0,0,0,0.18)"/><path d="M8.5 1 L15.5 4.6 L15.5 12.4 L8.5 16 L1.5 12.4 L1.5 4.6 Z M1.5 4.6 L8.5 8.2 L15.5 4.6 M8.5 8.2 V16" fill="none" stroke="#c4c4c4" stroke-width="1.4" stroke-linejoin="round"/></svg>
<div class="t" style="left:1028px;top:378px;font-size:15px;line-height:17px;letter-spacing:0.55px;color:#c8c8c8">Text (TMP)</div>
<svg style="left:974px;top:402px" width="9" height="10" viewBox="0 0 9 10"><polygon points="0,0 9,5 0,10" fill="#7a7a7a"/></svg>
<svg style="left:989px;top:398px" width="17" height="17" viewBox="0 0 17 17"><path d="M8.5 1 L15.5 4.6 L15.5 12.4 L8.5 16 L1.5 12.4 L1.5 4.6 Z" fill="rgba(0,0,0,0.18)"/><path d="M8.5 1 L15.5 4.6 L15.5 12.4 L8.5 16 L1.5 12.4 L1.5 4.6 Z M1.5 4.6 L8.5 8.2 L15.5 4.6 M8.5 8.2 V16" fill="none" stroke="#c4c4c4" stroke-width="1.4" stroke-linejoin="round"/></svg>
<div class="t" style="left:1010px;top:398px;font-size:15px;line-height:17px;letter-spacing:0.44px;color:#c8c8c8">ItemSlot (1)</div>
<svg style="left:974px;top:422px" width="9" height="10" viewBox="0 0 9 10"><polygon points="0,0 9,5 0,10" fill="#7a7a7a"/></svg>
<svg style="left:989px;top:418px" width="17" height="17" viewBox="0 0 17 17"><path d="M8.5 1 L15.5 4.6 L15.5 12.4 L8.5 16 L1.5 12.4 L1.5 4.6 Z" fill="rgba(0,0,0,0.18)"/><path d="M8.5 1 L15.5 4.6 L15.5 12.4 L8.5 16 L1.5 12.4 L1.5 4.6 Z M1.5 4.6 L8.5 8.2 L15.5 4.6 M8.5 8.2 V16" fill="none" stroke="#c4c4c4" stroke-width="1.4" stroke-linejoin="round"/></svg>
<div class="t" style="left:1010px;top:418px;font-size:15px;line-height:17px;letter-spacing:0.55px;color:#c8c8c8">ItemSlot (2)</div>
<svg style="left:974px;top:442px" width="9" height="10" viewBox="0 0 9 10"><polygon points="0,0 9,5 0,10" fill="#7a7a7a"/></svg>
<svg style="left:989px;top:438px" width="17" height="17" viewBox="0 0 17 17"><path d="M8.5 1 L15.5 4.6 L15.5 12.4 L8.5 16 L1.5 12.4 L1.5 4.6 Z" fill="rgba(0,0,0,0.18)"/><path d="M8.5 1 L15.5 4.6 L15.5 12.4 L8.5 16 L1.5 12.4 L1.5 4.6 Z M1.5 4.6 L8.5 8.2 L15.5 4.6 M8.5 8.2 V16" fill="none" stroke="#c4c4c4" stroke-width="1.4" stroke-linejoin="round"/></svg>
<div class="t" style="left:1010px;top:438px;font-size:15px;line-height:17px;letter-spacing:0.55px;color:#c8c8c8">ItemSlot (3)</div>
<svg style="left:957px;top:462px" width="9" height="10" viewBox="0 0 9 10"><polygon points="0,0 9,5 0,10" fill="#7a7a7a"/></svg>
<svg style="left:972px;top:458px" width="17" height="17" viewBox="0 0 17 17"><path d="M8.5 1 L15.5 4.6 L15.5 12.4 L8.5 16 L1.5 12.4 L1.5 4.6 Z" fill="rgba(0,0,0,0.18)"/><path d="M8.5 1 L15.5 4.6 L15.5 12.4 L8.5 16 L1.5 12.4 L1.5 4.6 Z M1.5 4.6 L8.5 8.2 L15.5 4.6 M8.5 8.2 V16" fill="none" stroke="#c4c4c4" stroke-width="1.4" stroke-linejoin="round"/></svg>
<div class="t" style="left:993px;top:458px;font-size:15px;line-height:17px;letter-spacing:0.7px;color:#c8c8c8">InventoryDescription</div>
<svg style="left:937px;top:478px" width="17" height="17" viewBox="0 0 17 17"><path d="M8.5 1 L15.5 4.6 L15.5 12.4 L8.5 16 L1.5 12.4 L1.5 4.6 Z" fill="rgba(0,0,0,0.18)"/><path d="M8.5 1 L15.5 4.6 L15.5 12.4 L8.5 16 L1.5 12.4 L1.5 4.6 Z M1.5 4.6 L8.5 8.2 L15.5 4.6 M8.5 8.2 V16" fill="none" stroke="#c4c4c4" stroke-width="1.4" stroke-linejoin="round"/></svg>
<div class="t" style="left:958px;top:478px;font-size:15px;line-height:17px;letter-spacing:0.68px;color:#c8c8c8">EventSystem</div>
<svg style="left:922px;top:502px" width="9" height="10" viewBox="0 0 9 10"><polygon points="0,0 9,5 0,10" fill="#7a7a7a"/></svg>
<svg style="left:937px;top:498px" width="17" height="17" viewBox="0 0 17 17"><path d="M8.5 1 L15.5 4.6 L15.5 12.4 L8.5 16 L1.5 12.4 L1.5 4.6 Z" fill="rgba(0,0,0,0.18)"/><path d="M8.5 1 L15.5 4.6 L15.5 12.4 L8.5 16 L1.5 12.4 L1.5 4.6 Z M1.5 4.6 L8.5 8.2 L15.5 4.6 M8.5 8.2 V16" fill="none" stroke="#c4c4c4" stroke-width="1.4" stroke-linejoin="round"/></svg>
<div class="t" style="left:958px;top:498px;font-size:15px;line-height:17px;letter-spacing:0.55px;color:#c8c8c8">Burger</div>
<svg style="left:922px;top:522px" width="9" height="10" viewBox="0 0 9 10"><polygon points="0,0 9,5 0,10" fill="#7a7a7a"/></svg>
<svg style="left:937px;top:518px" width="17" height="17" viewBox="0 0 17 17"><path d="M8.5 1 L15.5 4.6 L15.5 12.4 L8.5 16 L1.5 12.4 L1.5 4.6 Z" fill="rgba(0,0,0,0.18)"/><path d="M8.5 1 L15.5 4.6 L15.5 12.4 L8.5 16 L1.5 12.4 L1.5 4.6 Z M1.5 4.6 L8.5 8.2 L15.5 4.6 M8.5 8.2 V16" fill="none" stroke="#c4c4c4" stroke-width="1.4" stroke-linejoin="round"/></svg>
<div class="t" style="left:958px;top:518px;font-size:15px;line-height:17px;letter-spacing:0.55px;color:#c8c8c8">Coke</div>
<svg style="left:1420px;top:241px" width="7" height="11" viewBox="0 0 7 11"><path d="M1 1 L6 5.5 L1 10" fill="none" stroke="#9a9a9a" stroke-width="1.4"/></svg>
<svg style="left:1451px;top:111px" width="13" height="13" viewBox="0 0 13 13"><circle cx="6.5" cy="6.5" r="6.3" fill="#c8c8c8"/><rect x="5.4" y="5.2" width="2.2" height="5.3" fill="#3c3c3c"/><circle cx="6.5" cy="3.3" r="1.2" fill="#3c3c3c"/></svg>
<div class="t" style="left:1469px;top:109px;font-size:15px;letter-spacing:0.84px;color:#c8c8c8;line-height:17px">Inspector</div>
<svg style="left:1876px;top:110px" width="11" height="12" viewBox="0 0 11 12"><rect x="0.7" y="5.7" width="9.6" height="5.6" fill="none" stroke="#d0d0d0" stroke-width="1.3"/><path d="M2.8 5.5 V3.2 Q2.8 0.7 5.5 0.7 Q8.2 0.7 8.2 3" fill="none" stroke="#d0d0d0" stroke-width="1.3"/></svg>
<div class="a" style="left:1901px;top:110px;width:3px;height:3px;border-radius:2px;background:#d8d8d8"></div><div class="a" style="left:1901px;top:114px;width:3px;height:3px;border-radius:2px;background:#d8d8d8"></div><div class="a" style="left:1901px;top:118px;width:3px;height:3px;border-radius:2px;background:#d8d8d8"></div>
<div class="a" style="left:1437px;top:131px;width:476px;height:74px;background:#3c3c3c"></div>
<svg style="left:1446px;top:144px" width="25" height="27" viewBox="0 0 25 27"><path d="M12.5 1.5 L23.5 7 L23.5 19.5 L12.5 25.5 L1.5 19.5 L1.5 7 Z M1.5 7 L12.5 12.8 L23.5 7 M12.5 12.8 V25.5" fill="none" stroke="#c4c4c4" stroke-width="1.7" stroke-linejoin="round"/></svg>
<svg style="left:1470px;top:170px" width="9" height="5" viewBox="0 0 9 5"><polygon points="0,0 9,0 4.5,5" fill="#c4c4c4"/></svg>
<div class="a" style="left:1496px;top:145px;width:17px;height:18px;background:#262626;border-radius:2px;border:1px solid #1e1e1e"></div><svg style="left:1499px;top:149px" width="11" height="10" viewBox="0 0 11 10"><path d="M1 5.2 L4 8.2 L10 1.2" fill="none" stroke="#f0f0f0" stroke-width="1.8"/></svg>
<div class="a" style="left:1521px;top:142px;width:298px;height:23px;background:#2a2a2a;border-radius:3px;border:1px solid #222"></div>
<div class="t b" style="left:1524px;top:146px;font-size:15px;line-height:17px;letter-spacing:0.46px;color:#dcdcdc">InventoryCanvas</div>
<div class="a" style="left:1823px;top:145px;width:17px;height:18px;background:#262626;border-radius:2px;border:1px solid #1e1e1e"></div>
<div class="t" style="left:1846px;top:146px;font-size:15px;letter-spacing:1.08px;color:#c4c4c4;line-height:17px">Static</div>
<svg style="left:1901px;top:151px" width="10" height="6" viewBox="0 0 10 6"><polygon points="0,0 10,0 5,6" fill="#c4c4c4"/></svg>
<div class="t" style="left:1487px;top:175px;font-size:15px;letter-spacing:1.95px;color:#c4c4c4;line-height:17px">Tag</div>
<div class="a" style="left:1520px;top:173px;width:172px;height:21px;background:#4c4c4c;border-radius:3px;border:1px solid #303030"></div>
<div class="t" style="left:1525px;top:175px;font-size:15px;letter-spacing:0.6px;color:#cfcfcf;line-height:17px">Untagged</div>
<svg style="left:1676px;top:181px" width="10" height="6" viewBox="0 0 10 6"><polygon points="0,0 10,0 5,6" fill="#c4c4c4"/></svg>
<div class="t" style="left:1708px;top:175px;font-size:15px;letter-spacing:0.85px;color:#c4c4c4;line-height:17px">Layer</div>
<div class="a" style="left:1754px;top:173px;width:159px;height:21px;background:#4c4c4c;border-radius:3px;border:1px solid #303030"></div>
<div class="t" style="left:1759px;top:175px;font-size:15px;color:#cfcfcf;line-height:17px">UI</div>
<svg style="left:1897px;top:181px" width="10" height="6" viewBox="0 0 10 6"><polygon points="0,0 10,0 5,6" fill="#c4c4c4"/></svg>
<div class="a" style="left:1437px;top:205px;width:476px;height:141px;background:#3e3e3e"></div>
<div class="a" style="left:1437px;top:205px;width:476px;height:1px;background:#1f1f1f"></div>
<svg style="left:1447px;top:215px" width="9" height="10" viewBox="0 0 9 10"><polygon points="0,0 9,5 0,10" fill="#8a8a8a"/></svg>
<div class="t b" style="left:1512px;top:211px;font-size:15px;line-height:17px;letter-spacing:0.47px;color:#d6d6d6">Rect Transform</div>
<svg style="left:1848px;top:213px" width="12" height="12" viewBox="0 0 12 12"><circle cx="6" cy="6" r="6" fill="#d0d0d0"/><path d="M4 4.5 Q4 2.5 6 2.5 Q8 2.5 8 4.3 Q8 5.5 6.2 6.3 V7.3" fill="none" stroke="#3e3e3e" stroke-width="1.5"/><circle cx="6.2" cy="9.3" r="0.9" fill="#3e3e3e"/></svg>
<svg style="left:1873px;top:213px" width="13" height="14" viewBox="0 0 13 14"><path d="M0.5 3.5 H7 M10 3.5 H12.5 M5.5 10 H12.5" stroke="#d0d0d0" stroke-width="1.5"/><rect x="0.3" y="9.2" width="1.8" height="1.6" fill="#d0d0d0"/><rect x="7.4" y="0.6" width="2.8" height="6" fill="#d0d0d0"/><rect x="3.2" y="7" width="2.8" height="6.4" fill="#d0d0d0"/></svg>
<div class="a" style="left:1903px;top:214px;width:3px;height:3px;border-radius:2px;background:#d8d8d8"></div><div class="a" style="left:1903px;top:218px;width:3px;height:3px;border-radius:2px;background:#d8d8d8"></div><div class="a" style="left:1903px;top:222px;width:3px;height:3px;border-radius:2px;background:#d8d8d8"></div>
<div class="a" style="left:1437px;top:233px;width:476px;height:1px;background:#1f1f1f"></div>
<svg style="left:1447px;top:243px" width="9" height="10" viewBox="0 0 9 10"><polygon points="0,0 9,5 0,10" fill="#8a8a8a"/></svg>
<div class="a" style="left:1487px;top:239px;width:17px;height:18px;background:#262626;border-radius:2px;border:1px solid #1e1e1e"></div><svg style="left:1490px;top:243px" width="11" height="10" viewBox="0 0 11 10"><path d="M1 5.2 L4 8.2 L10 1.2" fill="none" stroke="#f0f0f0" stroke-width="1.8"/></svg>
<div class="t b" style="left:1512px;top:239px;font-size:15px;line-height:17px;letter-spacing:0.25px;color:#d6d6d6">Canvas</div>
<svg style="left:1848px;top:241px" width="12" height="12" viewBox="0 0 12 12"><circle cx="6" cy="6" r="6" fill="#d0d0d0"/><path d="M4 4.5 Q4 2.5 6 2.5 Q8 2.5 8 4.3 Q8 5.5 6.2 6.3 V7.3" fill="none" stroke="#3e3e3e" stroke-width="1.5"/><circle cx="6.2" cy="9.3" r="0.9" fill="#3e3e3e"/></svg>
<svg style="left:1873px;top:241px" width="13" height="14" viewBox="0 0 13 14"><path d="M0.5 3.5 H7 M10 3.5 H12.5 M5.5 10 H12.5" stroke="#d0d0d0" stroke-width="1.5"/><rect x="0.3" y="9.2" width="1.8" height="1.6" fill="#d0d0d0"/><rect x="7.4" y="0.6" width="2.8" height="6" fill="#d0d0d0"/><rect x="3.2" y="7" width="2.8" height="6.4" fill="#d0d0d0"/></svg>
<div class="a" style="left:1903px;top:242px;width:3px;height:3px;border-radius:2px;background:#d8d8d8"></div><div class="a" style="left:1903px;top:246px;width:3px;height:3px;border-radius:2px;background:#d8d8d8"></div><div class="a" style="left:1903px;top:250px;width:3px;height:3px;border-radius:2px;background:#d8d8d8"></div>
<div class="a" style="left:1437px;top:261px;width:476px;height:1px;background:#1f1f1f"></div>
<svg style="left:1447px;top:271px" width="9" height="10" viewBox="0 0 9 10"><polygon points="0,0 9,5 0,10" fill="#8a8a8a"/></svg>
<div class="a" style="left:1487px;top:267px;width:17px;height:18px;background:#262626;border-radius:2px;border:1px solid #1e1e1e"></div><svg style="left:1490px;top:271px" width="11" height="10" viewBox="0 0 11 10"><path d="M1 5.2 L4 8.2 L10 1.2" fill="none" stroke="#f0f0f0" stroke-width="1.8"/></svg>
<div class="t b" style="left:1512px;top:267px;font-size:15px;line-height:17px;letter-spacing:0.23px;color:#d6d6d6">Canvas Scaler</div>
<svg style="left:1848px;top:269px" width="12" height="12" viewBox="0 0 12 12"><circle cx="6" cy="6" r="6" fill="#d0d0d0"/><path d="M4 4.5 Q4 2.5 6 2.5 Q8 2.5 8 4.3 Q8 5.5 6.2 6.3 V7.3" fill="none" stroke="#3e3e3e" stroke-width="1.5"/><circle cx="6.2" cy="9.3" r="0.9" fill="#3e3e3e"/></svg>
<svg style="left:1873px;top:269px" width="13" height="14" viewBox="0 0 13 14"><path d="M0.5 3.5 H7 M10 3.5 H12.5 M5.5 10 H12.5" stroke="#d0d0d0" stroke-width="1.5"/><rect x="0.3" y="9.2" width="1.8" height="1.6" fill="#d0d0d0"/><rect x="7.4" y="0.6" width="2.8" height="6" fill="#d0d0d0"/><rect x="3.2" y="7" width="2.8" height="6.4" fill="#d0d0d0"/></svg>
<div class="a" style="left:1903px;top:270px;width:3px;height:3px;border-radius:2px;background:#d8d8d8"></div><div class="a" style="left:1903px;top:274px;width:3px;height:3px;border-radius:2px;background:#d8d8d8"></div><div class="a" style="left:1903px;top:278px;width:3px;height:3px;border-radius:2px;background:#d8d8d8"></div>
<div class="a" style="left:1437px;top:289px;width:476px;height:1px;background:#1f1f1f"></div>
<svg style="left:1447px;top:299px" width="9" height="10" viewBox="0 0 9 10"><polygon points="0,0 9,5 0,10" fill="#8a8a8a"/></svg>
<div class="a" style="left:1487px;top:295px;width:17px;height:18px;background:#262626;border-radius:2px;border:1px solid #1e1e1e"></div><svg style="left:1490px;top:299px" width="11" height="10" viewBox="0 0 11 10"><path d="M1 5.2 L4 8.2 L10 1.2" fill="none" stroke="#f0f0f0" stroke-width="1.8"/></svg>
<div class="t b" style="left:1512px;top:295px;font-size:15px;line-height:17px;letter-spacing:0.25px;color:#d6d6d6">Graphic Raycaster</div>
<svg style="left:1848px;top:297px" width="12" height="12" viewBox="0 0 12 12"><circle cx="6" cy="6" r="6" fill="#d0d0d0"/><path d="M4 4.5 Q4 2.5 6 2.5 Q8 2.5 8 4.3 Q8 5.5 6.2 6.3 V7.3" fill="none" stroke="#3e3e3e" stroke-width="1.5"/><circle cx="6.2" cy="9.3" r="0.9" fill="#3e3e3e"/></svg>
<svg style="left:1873px;top:297px" width="13" height="14" viewBox="0 0 13 14"><path d="M0.5 3.5 H7 M10 3.5 H12.5 M5.5 10 H12.5" stroke="#d0d0d0" stroke-width="1.5"/><rect x="0.3" y="9.2" width="1.8" height="1.6" fill="#d0d0d0"/><rect x="7.4" y="0.6" width="2.8" height="6" fill="#d0d0d0"/><rect x="3.2" y="7" width="2.8" height="6.4" fill="#d0d0d0"/></svg>
<div class="a" style="left:1903px;top:298px;width:3px;height:3px;border-radius:2px;background:#d8d8d8"></div><div class="a" style="left:1903px;top:302px;width:3px;height:3px;border-radius:2px;background:#d8d8d8"></div><div class="a" style="left:1903px;top:306px;width:3px;height:3px;border-radius:2px;background:#d8d8d8"></div>
<div class="a" style="left:1437px;top:317px;width:476px;height:1px;background:#1f1f1f"></div>
<svg style="left:1446px;top:328px" width="10" height="9" viewBox="0 0 10 9"><polygon points="0,0 10,0 5,9" fill="#8a8a8a"/></svg>
<div class="a" style="left:1487px;top:323px;width:17px;height:18px;background:#262626;border-radius:2px;border:1px solid #1e1e1e"></div><svg style="left:1490px;top:327px" width="11" height="10" viewBox="0 0 11 10"><path d="M1 5.2 L4 8.2 L10 1.2" fill="none" stroke="#f0f0f0" stroke-width="1.8"/></svg>
<div class="t b" style="left:1512px;top:323px;font-size:15px;line-height:17px;letter-spacing:0.4px;color:#d6d6d6">Inventory Manager (Script)</div>
<svg style="left:1848px;top:325px" width="12" height="12" viewBox="0 0 12 12"><circle cx="6" cy="6" r="6" fill="#d0d0d0"/><path d="M4 4.5 Q4 2.5 6 2.5 Q8 2.5 8 4.3 Q8 5.5 6.2 6.3 V7.3" fill="none" stroke="#3e3e3e" stroke-width="1.5"/><circle cx="6.2" cy="9.3" r="0.9" fill="#3e3e3e"/></svg>
<svg style="left:1873px;top:325px" width="13" height="14" viewBox="0 0 13 14"><path d="M0.5 3.5 H7 M10 3.5 H12.5 M5.5 10 H12.5" stroke="#d0d0d0" stroke-width="1.5"/><rect x="0.3" y="9.2" width="1.8" height="1.6" fill="#d0d0d0"/><rect x="7.4" y="0.6" width="2.8" height="6" fill="#d0d0d0"/><rect x="3.2" y="7" width="2.8" height="6.4" fill="#d0d0d0"/></svg>
<div class="a" style="left:1903px;top:326px;width:3px;height:3px;border-radius:2px;background:#d8d8d8"></div><div class="a" style="left:1903px;top:330px;width:3px;height:3px;border-radius:2px;background:#d8d8d8"></div><div class="a" style="left:1903px;top:334px;width:3px;height:3px;border-radius:2px;background:#d8d8d8"></div>
<svg style="left:1463px;top:211px" width="18" height="17" viewBox="0 0 18 17"><path d="M1 1 L6 2.5 L2.5 6Z M17 1 L12 2.5 L15.5 6Z M1 16 L6 14.5 L2.5 11Z M17 16 L12 14.5 L15.5 11Z" fill="#c8c8c8" stroke="#c8c8c8" stroke-width="1"/></svg>
<svg style="left:1463px;top:240px" width="18" height="17" viewBox="0 0 18 17"><rect x="2" y="2" width="14" height="13" fill="none" stroke="#c8c8c8" stroke-width="1.5"/><rect x="4.5" y="4.5" width="9" height="8" fill="#c8c8c8"/><circle cx="2" cy="2" r="1.6" fill="#c8c8c8"/><circle cx="16" cy="2" r="1.6" fill="#c8c8c8"/><circle cx="2" cy="15" r="1.6" fill="#c8c8c8"/><circle cx="16" cy="15" r="1.6" fill="#c8c8c8"/></svg>
<svg style="left:1463px;top:268px" width="18" height="17" viewBox="0 0 18 17"><rect x="1" y="1.5" width="16" height="14" fill="none" stroke="#b8b8b8" stroke-width="1.3"/><path d="M3.5 4 H14 V13 H9 V9 H3.5Z" fill="#d0d0d0"/></svg>
<svg style="left:1463px;top:296px" width="18" height="17" viewBox="0 0 18 17"><rect x="3" y="3" width="12" height="11" rx="2" fill="none" stroke="#b8b8b8" stroke-width="1.5"/><circle cx="2.5" cy="2.5" r="1.4" fill="#4ab0e0"/><circle cx="15.5" cy="14.5" r="1.4" fill="#4ab0e0"/></svg>
<svg style="left:1466px;top:324px" width="14" height="17" viewBox="0 0 12 14"><path d="M0 0 H8.5 L12 3.5 V14 H0Z" fill="#e8e8e8"/><path d="M4.3 3 L3.5 11.5 M7.8 3 L7 11.5 M2 5.5 H10 M1.6 8.8 H9.6" stroke="#3a8a3a" stroke-width="1.2"/></svg>
<div class="t" style="left:1461px;top:354px;font-size:15px;letter-spacing:0.86px;color:#8a8a8a;line-height:17px">Script</div>
<div class="a" style="left:1631px;top:351px;width:282px;height:21px;background:#303030;border-radius:3px"></div>
<svg style="left:1636px;top:356px" width="11" height="13" viewBox="0 0 12 14"><path d="M0 0 H8.5 L12 3.5 V14 H0Z" fill="#9a9a9a"/><path d="M4.3 3 L3.5 11.5 M7.8 3 L7 11.5 M2 5.5 H10 M1.6 8.8 H9.6" stroke="#3f5f3f" stroke-width="1.2"/></svg>
<div class="t" style="left:1652px;top:353px;font-size:15px;letter-spacing:0.5px;color:#8a8a8a;line-height:17px">InventoryManager</div>
<svg style="left:1896px;top:355px" width="12" height="12" viewBox="0 0 12 12"><circle cx="6" cy="6" r="5.2" fill="none" stroke="#7a7a7a" stroke-width="1.2"/><circle cx="6" cy="6" r="2" fill="#7a7a7a"/></svg>
<div class="t" style="left:1461px;top:379px;font-size:15px;letter-spacing:0.72px;color:#c4c4c4;line-height:17px">Inventory Menu</div>
<div class="a" style="left:1631px;top:376px;width:282px;height:22px;background:#2a2a2a;border-radius:3px"></div>
<div class="a" style="left:1891px;top:376px;width:22px;height:22px;background:#333;border-radius:0 3px 3px 0"></div>
<svg style="left:1635px;top:378px" width="14" height="14" viewBox="0 0 17 17"><path d="M8.5 1 L15.5 4.6 L15.5 12.4 L8.5 16 L1.5 12.4 L1.5 4.6 Z" fill="rgba(0,0,0,0.18)"/><path d="M8.5 1 L15.5 4.6 L15.5 12.4 L8.5 16 L1.5 12.4 L1.5 4.6 Z M1.5 4.6 L8.5 8.2 L15.5 4.6 M8.5 8.2 V16" fill="none" stroke="#c4c4c4" stroke-width="1.4" stroke-linejoin="round"/></svg>
<div class="t" style="left:1652px;top:378px;font-size:15px;letter-spacing:0.5px;color:#d0d0d0;line-height:17px">InventoryMenu</div>
<svg style="left:1896px;top:381px" width="12" height="12" viewBox="0 0 12 12"><circle cx="6" cy="6" r="5.2" fill="none" stroke="#c4c4c4" stroke-width="1.2"/><circle cx="6" cy="6" r="2" fill="#c4c4c4"/></svg>
<svg style="left:1459px;top:408px" width="10" height="9" viewBox="0 0 10 9"><polygon points="0,0 10,0 5,9" fill="#8a8a8a"/></svg>
<div class="t" style="left:1477px;top:404px;font-size:15px;letter-spacing:0.0px;color:#c4c4c4;line-height:17px">Item Slot</div>
<div class="a" style="left:1889px;top:401px;width:23px;height:21px;background:#2a2a2a;border:1px solid #3a79bb;border-radius:3px"></div>
<div class="a" style="left:1894px;top:404px;width:11px;height:15px;background:#3a6ab4"></div>
<div class="t" style="left:1895px;top:404px;font-size:15px;color:#b8c8e8;line-height:17px">4</div>
<div class="a" style="left:1457px;top:424px;width:454px;height:114px;background:#454545;border-radius:4px;border:1px solid #2e2e2e"></div>
<div class="a" style="left:1458px;top:508px;width:452px;height:27px;background:#2e2e2e"></div>
<div class="a" style="left:1461px;top:436px;width:13px;height:1px;background:#7a7a7a"></div><div class="a" style="left:1461px;top:439px;width:13px;height:1px;background:#7a7a7a"></div>
<div class="t" style="left:1498px;top:433px;font-size:15px;letter-spacing:0.44px;color:#c4c4c4;line-height:17px">Element 0</div>
<div class="a" style="left:1630px;top:429px;width:277px;height:22px;background:#2a2a2a;border-radius:3px;"></div>
<div class="a" style="left:1884px;top:430px;width:22px;height:20px;background:#333333"></div>
<svg style="left:1636px;top:435px" width="11" height="13" viewBox="0 0 12 14"><path d="M0 0 H8.5 L12 3.5 V14 H0Z" fill="#e8e8e8"/><path d="M4.3 3 L3.5 11.5 M7.8 3 L7 11.5 M2 5.5 H10 M1.6 8.8 H9.6" stroke="#3a8a3a" stroke-width="1.2"/></svg>
<div class="t" style="left:1652px;top:432px;font-size:15px;letter-spacing:0.51px;color:#d0d0d0;line-height:17px">ItemSlot (Item Slot)</div>
<svg style="left:1889px;top:434px" width="12" height="12" viewBox="0 0 12 12"><circle cx="6" cy="6" r="5.2" fill="none" stroke="#c4c4c4" stroke-width="1.2"/><circle cx="6" cy="6" r="2" fill="#c4c4c4"/></svg>
<div class="a" style="left:1461px;top:463px;width:13px;height:1px;background:#7a7a7a"></div><div class="a" style="left:1461px;top:466px;width:13px;height:1px;background:#7a7a7a"></div>
<div class="t" style="left:1498px;top:460px;font-size:15px;letter-spacing:0.6px;color:#c4c4c4;line-height:17px">Element 1</div>
<div class="a" style="left:1630px;top:456px;width:277px;height:22px;background:#2a2a2a;border-radius:3px;"></div>
<div class="a" style="left:1884px;top:457px;width:22px;height:20px;background:#333333"></div>
<svg style="left:1636px;top:462px" width="11" height="13" viewBox="0 0 12 14"><path d="M0 0 H8.5 L12 3.5 V14 H0Z" fill="#e8e8e8"/><path d="M4.3 3 L3.5 11.5 M7.8 3 L7 11.5 M2 5.5 H10 M1.6 8.8 H9.6" stroke="#3a8a3a" stroke-width="1.2"/></svg>
<div class="t" style="left:1652px;top:459px;font-size:15px;letter-spacing:0.55px;color:#d0d0d0;line-height:17px">ItemSlot (1) (Item Slot)</div>
<svg style="left:1889px;top:461px" width="12" height="12" viewBox="0 0 12 12"><circle cx="6" cy="6" r="5.2" fill="none" stroke="#c4c4c4" stroke-width="1.2"/><circle cx="6" cy="6" r="2" fill="#c4c4c4"/></svg>
<div class="a" style="left:1461px;top:490px;width:13px;height:1px;background:#7a7a7a"></div><div class="a" style="left:1461px;top:493px;width:13px;height:1px;background:#7a7a7a"></div>
<div class="t" style="left:1498px;top:487px;font-size:15px;letter-spacing:0.6px;color:#c4c4c4;line-height:17px">Element 2</div>
<div class="a" style="left:1630px;top:483px;width:277px;height:22px;background:#2a2a2a;border-radius:3px;"></div>
<div class="a" style="left:1884px;top:484px;width:22px;height:20px;background:#333333"></div>
<svg style="left:1636px;top:489px" width="11" height="13" viewBox="0 0 12 14"><path d="M0 0 H8.5 L12 3.5 V14 H0Z" fill="#e8e8e8"/><path d="M4.3 3 L3.5 11.5 M7.8 3 L7 11.5 M2 5.5 H10 M1.6 8.8 H9.6" stroke="#3a8a3a" stroke-width="1.2"/></svg>
<div class="t" style="left:1652px;top:486px;font-size:15px;letter-spacing:0.55px;color:#d0d0d0;line-height:17px">ItemSlot (2) (Item Slot)</div>
<svg style="left:1889px;top:488px" width="12" height="12" viewBox="0 0 12 12"><circle cx="6" cy="6" r="5.2" fill="none" stroke="#c4c4c4" stroke-width="1.2"/><circle cx="6" cy="6" r="2" fill="#c4c4c4"/></svg>
<div class="a" style="left:1461px;top:517px;width:13px;height:1px;background:#7a7a7a"></div><div class="a" style="left:1461px;top:520px;width:13px;height:1px;background:#7a7a7a"></div>
<div class="t" style="left:1498px;top:514px;font-size:15px;letter-spacing:0.6px;color:#c4c4c4;line-height:17px">Element 3</div>
<div class="a" style="left:1630px;top:510px;width:277px;height:22px;background:#2a2a2a;border-radius:3px;border:1px solid #5e5e5e;"></div>
<div class="a" style="left:1884px;top:511px;width:22px;height:20px;background:#333333"></div>
<svg style="left:1636px;top:516px" width="11" height="13" viewBox="0 0 12 14"><path d="M0 0 H8.5 L12 3.5 V14 H0Z" fill="#e8e8e8"/><path d="M4.3 3 L3.5 11.5 M7.8 3 L7 11.5 M2 5.5 H10 M1.6 8.8 H9.6" stroke="#3a8a3a" stroke-width="1.2"/></svg>
<div class="t" style="left:1652px;top:513px;font-size:15px;letter-spacing:0.55px;color:#d0d0d0;line-height:17px">ItemSlot (3) (Item Slot)</div>
<svg style="left:1889px;top:515px" width="12" height="12" viewBox="0 0 12 12"><circle cx="6" cy="6" r="5.2" fill="none" stroke="#c4c4c4" stroke-width="1.2"/><circle cx="6" cy="6" r="2" fill="#c4c4c4"/></svg>
<div class="a" style="left:1828px;top:538px;width:65px;height:27px;background:#3c3c3c;border-radius:0 0 4px 4px;border:1px solid #2e2e2e;border-top:none"></div>
<svg style="left:1841px;top:547px" width="12" height="12" viewBox="0 0 12 12"><path d="M6 0.5 V11.5 M0.5 6 H11.5" stroke="#e0e0e0" stroke-width="2"/></svg>
<div class="a" style="left:1868px;top:552px;width:9px;height:2px;background:#e0e0e0"></div>
<div class="a" style="left:1437px;top:576px;width:476px;height:1px;background:#232323"></div>
<div class="a" style="left:1535px;top:588px;width:286px;height:29px;background:#575757;border-radius:3px;border:1px solid #2a2a2a"></div>
<div class="t" style="left:1620px;top:594px;font-size:15px;line-height:17px;letter-spacing:0.61px;color:#d0d0d0">Add Component</div>
<div class="a" style="left:1437px;top:1073px;width:476px;height:1px;background:#232323"></div>
<div class="a" style="left:1437px;top:1074px;width:476px;height:32px;background:#3c3c3c"></div>
<div class="a" style="left:1437px;top:1106px;width:476px;height:1px;background:#232323"></div>
<div class="t b" style="left:1442px;top:1082px;font-size:15px;line-height:17px;letter-spacing:0.2px;color:#c8c8c8">Asset Labels</div>
<!-- GAME PANEL -->
<div id="game" class="a" style="left:0;top:689px;width:959px;height:424px;background:#151515">
  <div class="a" style="left:125px;top:0;width:110px;height:30px;background:#3c3c3c;border-radius:4px 4px 0 0"></div>
  <div class="a" style="left:0;top:30px;width:959px;height:26px;background:#3c3c3c"></div>
  <div class="a" style="left:0;top:56px;width:959px;height:368px;background:#292929"></div>
  <div class="a" style="left:151px;top:56px;width:656px;height:368px;background:#17142a"></div>
</div>

<!-- PROJECT PANEL -->
<div id="proj" class="a" style="left:961px;top:689px;width:474px;height:424px;background:#151515">
  <div class="a" style="left:0;top:0;width:117px;height:30px;background:#383838;border-radius:4px 4px 0 0"></div>
  <div class="a" style="left:0;top:30px;width:474px;height:25px;background:#3c3c3c"></div>
  <div class="a" style="left:0;top:55px;width:474px;height:369px;background:#383838"></div>
</div>

<!-- game+proj content -->
<svg style="left:12px;top:698px" width="13" height="13" viewBox="0 0 13 13"><rect x="0.7" y="0.7" width="11.6" height="11.6" fill="none" stroke="#c4c4c4" stroke-width="1.4"/><path d="M3 3.5 H10 M3 6.5 H10 M3 9.5 H10" stroke="#c4c4c4" stroke-width="1.3"/></svg>
<div class="t" style="left:31px;top:697px;font-size:15px;line-height:17px;letter-spacing:0.52px;color:#c4c4c4">Console</div>
<svg style="left:136px;top:700px" width="18" height="11" viewBox="0 0 18 11"><path d="M4 0.5 H14 Q17.5 0.5 17.5 5.5 Q17.5 10.5 14.5 10.5 Q13 10.5 12 8.5 H6 Q5 10.5 3.5 10.5 Q0.5 10.5 0.5 5.5 Q0.5 0.5 4 0.5Z" fill="#c8c8c8"/><path d="M3 5.5 H7 M5 3.5 V7.5" stroke="#3c3c3c" stroke-width="1.3"/><circle cx="12.5" cy="4" r="1" fill="#3c3c3c"/><circle cx="14.5" cy="6.5" r="1" fill="#3c3c3c"/></svg>
<div class="t" style="left:157px;top:697px;font-size:15px;line-height:17px;letter-spacing:0.67px;color:#c8c8c8">Game</div>
<div class="a" style="left:940px;top:699px;width:3px;height:3px;border-radius:2px;background:#d8d8d8"></div><div class="a" style="left:940px;top:703px;width:3px;height:3px;border-radius:2px;background:#d8d8d8"></div><div class="a" style="left:940px;top:707px;width:3px;height:3px;border-radius:2px;background:#d8d8d8"></div>
<div class="a" style="left:0;top:719px;width:959px;height:1px;background:#232323"></div>
<div class="a" style="left:113px;top:720px;width:1px;height:25px;background:#262626"></div>
<div class="a" style="left:220px;top:720px;width:1px;height:25px;background:#262626"></div>
<div class="a" style="left:420px;top:720px;width:1px;height:25px;background:#262626"></div>
<div class="a" style="left:586px;top:720px;width:1px;height:25px;background:#262626"></div>
<div class="a" style="left:724px;top:720px;width:1px;height:25px;background:#262626"></div>
<div class="a" style="left:756px;top:720px;width:1px;height:25px;background:#262626"></div>
<div class="a" style="left:789px;top:720px;width:1px;height:25px;background:#262626"></div>
<div class="a" style="left:821px;top:720px;width:1px;height:25px;background:#262626"></div>
<div class="a" style="left:871px;top:720px;width:1px;height:25px;background:#262626"></div>
<div class="t" style="left:5px;top:724px;font-size:15px;line-height:17px;letter-spacing:0.7px;color:#c4c4c4">Game</div>
<svg style="left:98px;top:729px" width="10" height="6" viewBox="0 0 10 6"><polygon points="0,0 10,0 5,6" fill="#c4c4c4"/></svg>
<div class="t" style="left:125px;top:724px;font-size:15px;line-height:17px;letter-spacing:0.44px;color:#c4c4c4">Display 1</div>
<svg style="left:205px;top:729px" width="10" height="6" viewBox="0 0 10 6"><polygon points="0,0 10,0 5,6" fill="#c4c4c4"/></svg>
<div class="t" style="left:225px;top:724px;font-size:15px;line-height:17px;letter-spacing:0.36px;color:#c4c4c4">Full HD (1920x1080)</div>
<svg style="left:405px;top:729px" width="10" height="6" viewBox="0 0 10 6"><polygon points="0,0 10,0 5,6" fill="#c4c4c4"/></svg>
<div class="t" style="left:429px;top:724px;font-size:15px;line-height:17px;letter-spacing:0.6px;color:#c4c4c4">Scale</div>
<div class="a" style="left:480px;top:731px;width:47px;height:3px;background:#5a5a5a;border-radius:2px"></div>
<div class="a" style="left:474px;top:726px;width:13px;height:13px;background:#9a9a9a;border-radius:7px"></div>
<div class="t" style="left:535px;top:724px;font-size:15px;line-height:17px;letter-spacing:1.2px;color:#c4c4c4">0.34x</div>
<div class="t" style="left:591px;top:724px;font-size:15px;line-height:17px;letter-spacing:0.69px;color:#c4c4c4">Play Unfocused</div>
<svg style="left:708px;top:729px" width="10" height="6" viewBox="0 0 10 6"><polygon points="0,0 10,0 5,6" fill="#c4c4c4"/></svg>
<svg style="left:730px;top:722px" width="19" height="20" viewBox="0 0 19 20"><ellipse cx="9.5" cy="11.8" rx="5.6" ry="7.2" fill="#cacaca"/><path d="M6.6 5.2 Q5.3 2.8 4.2 2.2 M12.4 5.2 Q13.7 2.8 14.8 2.2 M4.6 8.6 L2.2 5.6 M14.4 8.6 L16.8 5.6 M4.2 12.2 L1.4 12.2 M14.8 12.2 L17.6 12.2 M4.6 15.6 L2.4 18.4 M14.4 15.6 L16.6 18.4" fill="none" stroke="#cacaca" stroke-width="1.9" stroke-linecap="round"/></svg>
<svg style="left:763px;top:725px" width="18" height="14" viewBox="0 0 18 14"><path d="M1 4.5 H4 L9 0.5 V13.5 L4 9.5 H1Z" fill="#d0d0d0"/><path d="M11.5 4.5 Q13 7 11.5 9.5 M14 2 Q17 7 14 12" fill="none" stroke="#d0d0d0" stroke-width="1.4"/></svg>
<svg style="left:796px;top:725px" width="18" height="14" viewBox="0 0 18 14"><rect x="0.7" y="0.7" width="16.6" height="12.6" fill="none" stroke="#c8c8c8" stroke-width="1.4"/><path d="M3 4 H15 M3 7 H15 M5 10 H13" stroke="#c8c8c8" stroke-width="1.5" stroke-dasharray="2 1.2"/></svg>
<div class="t" style="left:828px;top:724px;font-size:15px;line-height:17px;letter-spacing:0.97px;color:#c4c4c4">Stats</div>
<div class="t" style="left:876px;top:724px;font-size:15px;line-height:17px;letter-spacing:0.7px;color:#c4c4c4">Gizmos</div>
<div class="a" style="left:936px;top:724px;width:1px;height:16px;background:#2a2a2a"></div>
<svg style="left:943px;top:729px" width="10" height="6" viewBox="0 0 10 6"><polygon points="0,0 10,0 5,6" fill="#c4c4c4"/></svg>
<div class="a" style="left:145px;top:745px;width:6px;height:369px;background:#2b2b27"></div><div class="a" style="left:212px;top:806px;width:535px;height:252px;background:#120f21;box-shadow:0 0 10px 6px #120f21"></div>
<svg style="left:0;top:0" width="960" height="1113"><g><polygon points="286,884 362,884 400,848 545,848 652,882 700,882 700,1036 546,1036 434,1000 286,1000" fill="#3a4070"/><polygon points="286,884 362,884 400,848 545,848 652,882 700,882 700,898 652,898 545,868 402,868 368,904 286,904" fill="#2f335c"/><polygon points="286,973 330,973 330,996 286,996" fill="#3a6585"/><polygon points="395,975 434,975 546,1010 700,1010 700,1036 546,1036 434,1000 395,1000" fill="#3f7192"/><polygon points="405,980 434,980 546,1016 700,1016 700,1022 546,1022 434,986 405,986" fill="#2f5a7a"/><rect x="478" y="888" width="18" height="8" fill="#2a2d52"/><rect x="490" y="901" width="17" height="8" fill="#2a2d52"/><rect x="484" y="916" width="10" height="8" fill="#2a2d52"/><rect x="538" y="944" width="18" height="8" fill="#2a2d52"/><rect x="528" y="957" width="17" height="8" fill="#2a2d52"/><rect x="536" y="973" width="17" height="8" fill="#2a2d52"/><rect x="372" y="927" width="6" height="30" fill="#2a2d52"/><rect x="368" y="955" width="20" height="18" fill="#2a2d52"/><path d="M447 851 V878 M468 851 V878" stroke="#5a7ac0" stroke-width="2" stroke-dasharray="3 2"/><rect x="443" y="850" width="9" height="3" fill="#5a7ac0"/><rect x="464" y="850" width="9" height="3" fill="#5a7ac0"/><path d="M414 900 V888 L421 880 L428 888 V900Z" fill="#1e2040"/><rect x="418" y="889" width="6" height="10" fill="#3ab0c8"/><rect x="251" y="870" width="30" height="15" rx="1" fill="#c9675c"/><rect x="253" y="881" width="26" height="2" fill="#e3927a"/><rect x="282" y="868" width="3" height="17" fill="#6a50c0"/><g transform="translate(288,876) rotate(0.00)"><rect x="0.0" y="0" width="17.3" height="8" rx="1" fill="#c9675c"/><rect x="1.0" y="6" width="15.3" height="1.5" fill="#e3927a" opacity="0.8"/><rect x="18.9" y="0" width="17.3" height="8" rx="1" fill="#c9675c"/><rect x="19.9" y="6" width="15.3" height="1.5" fill="#e3927a" opacity="0.8"/><rect x="37.8" y="0" width="17.3" height="8" rx="1" fill="#c9675c"/><rect x="38.8" y="6" width="15.3" height="1.5" fill="#e3927a" opacity="0.8"/><rect x="56.7" y="0" width="17.3" height="8" rx="1" fill="#c9675c"/><rect x="57.7" y="6" width="15.3" height="1.5" fill="#e3927a" opacity="0.8"/></g><g transform="translate(362,880) rotate(-43.36)"><rect x="0.0" y="0" width="15.4" height="8" rx="1" fill="#c9675c"/><rect x="1.0" y="6" width="13.4" height="1.5" fill="#e3927a" opacity="0.8"/><rect x="17.0" y="0" width="15.4" height="8" rx="1" fill="#c9675c"/><rect x="18.0" y="6" width="13.4" height="1.5" fill="#e3927a" opacity="0.8"/><rect x="34.1" y="0" width="15.4" height="8" rx="1" fill="#c9675c"/><rect x="35.1" y="6" width="13.4" height="1.5" fill="#e3927a" opacity="0.8"/></g><g transform="translate(398,839) rotate(0.00)"><rect x="0.0" y="0" width="17.1" height="8" rx="1" fill="#c9675c"/><rect x="1.0" y="6" width="15.1" height="1.5" fill="#e3927a" opacity="0.8"/><rect x="18.7" y="0" width="17.1" height="8" rx="1" fill="#c9675c"/><rect x="19.7" y="6" width="15.1" height="1.5" fill="#e3927a" opacity="0.8"/><rect x="37.4" y="0" width="17.1" height="8" rx="1" fill="#c9675c"/><rect x="38.4" y="6" width="15.1" height="1.5" fill="#e3927a" opacity="0.8"/><rect x="56.1" y="0" width="17.1" height="8" rx="1" fill="#c9675c"/><rect x="57.1" y="6" width="15.1" height="1.5" fill="#e3927a" opacity="0.8"/><rect x="74.8" y="0" width="17.1" height="8" rx="1" fill="#c9675c"/><rect x="75.8" y="6" width="15.1" height="1.5" fill="#e3927a" opacity="0.8"/><rect x="93.5" y="0" width="17.1" height="8" rx="1" fill="#c9675c"/><rect x="94.5" y="6" width="15.1" height="1.5" fill="#e3927a" opacity="0.8"/><rect x="112.2" y="0" width="17.1" height="8" rx="1" fill="#c9675c"/><rect x="113.2" y="6" width="15.1" height="1.5" fill="#e3927a" opacity="0.8"/><rect x="130.9" y="0" width="17.1" height="8" rx="1" fill="#c9675c"/><rect x="131.9" y="6" width="15.1" height="1.5" fill="#e3927a" opacity="0.8"/></g><rect x="413" y="831" width="5" height="17" fill="#6a50c0"/><g transform="translate(546,840) rotate(18.27)"><rect x="0.0" y="0" width="17.3" height="8" rx="1" fill="#c9675c"/><rect x="1.0" y="6" width="15.3" height="1.5" fill="#e3927a" opacity="0.8"/><rect x="18.9" y="0" width="17.3" height="8" rx="1" fill="#c9675c"/><rect x="19.9" y="6" width="15.3" height="1.5" fill="#e3927a" opacity="0.8"/><rect x="37.7" y="0" width="17.3" height="8" rx="1" fill="#c9675c"/><rect x="38.7" y="6" width="15.3" height="1.5" fill="#e3927a" opacity="0.8"/><rect x="56.6" y="0" width="17.3" height="8" rx="1" fill="#c9675c"/><rect x="57.6" y="6" width="15.3" height="1.5" fill="#e3927a" opacity="0.8"/><rect x="75.5" y="0" width="17.3" height="8" rx="1" fill="#c9675c"/><rect x="76.5" y="6" width="15.3" height="1.5" fill="#e3927a" opacity="0.8"/><rect x="94.4" y="0" width="17.3" height="8" rx="1" fill="#c9675c"/><rect x="95.4" y="6" width="15.3" height="1.5" fill="#e3927a" opacity="0.8"/></g><g transform="translate(652,873) rotate(0.00)"><rect x="0.0" y="0" width="18.7" height="8" rx="1" fill="#c9675c"/><rect x="1.0" y="6" width="16.7" height="1.5" fill="#e3927a" opacity="0.8"/><rect x="20.3" y="0" width="18.7" height="8" rx="1" fill="#c9675c"/><rect x="21.3" y="6" width="16.7" height="1.5" fill="#e3927a" opacity="0.8"/></g><rect x="692" y="868" width="5" height="17" fill="#6a50c0"/><rect x="700" y="870" width="29" height="15" rx="1" fill="#c9675c"/><rect x="278" y="886.0" width="8" height="14" rx="1" fill="#c9675c"/><rect x="278" y="901.5" width="8" height="14" rx="1" fill="#c9675c"/><rect x="278" y="917.0" width="8" height="14" rx="1" fill="#c9675c"/><rect x="278" y="932.5" width="8" height="14" rx="1" fill="#c9675c"/><rect x="278" y="948.0" width="8" height="14" rx="1" fill="#c9675c"/><rect x="278" y="963.5" width="8" height="14" rx="1" fill="#c9675c"/><rect x="278" y="979.0" width="8" height="14" rx="1" fill="#c9675c"/><rect x="263" y="888" width="14" height="9" rx="1" fill="#6a55b8"/><rect x="263" y="901" width="14" height="9" rx="1" fill="#6a55b8"/><rect x="263" y="930" width="14" height="9" rx="1" fill="#6a55b8"/><rect x="263" y="960" width="14" height="9" rx="1" fill="#6a55b8"/><rect x="263" y="975" width="14" height="9" rx="1" fill="#6a55b8"/><rect x="263" y="988" width="14" height="9" rx="1" fill="#6a55b8"/><g transform="translate(269,996) rotate(0.00)"><rect x="0.0" y="0" width="16.9" height="8" rx="1" fill="#c9675c"/><rect x="1.0" y="6" width="14.9" height="1.5" fill="#e3927a" opacity="0.8"/><rect x="18.5" y="0" width="16.9" height="8" rx="1" fill="#c9675c"/><rect x="19.5" y="6" width="14.9" height="1.5" fill="#e3927a" opacity="0.8"/><rect x="37.0" y="0" width="16.9" height="8" rx="1" fill="#c9675c"/><rect x="38.0" y="6" width="14.9" height="1.5" fill="#e3927a" opacity="0.8"/><rect x="55.5" y="0" width="16.9" height="8" rx="1" fill="#c9675c"/><rect x="56.5" y="6" width="14.9" height="1.5" fill="#e3927a" opacity="0.8"/><rect x="74.0" y="0" width="16.9" height="8" rx="1" fill="#c9675c"/><rect x="75.0" y="6" width="14.9" height="1.5" fill="#e3927a" opacity="0.8"/><rect x="92.6" y="0" width="16.9" height="8" rx="1" fill="#c9675c"/><rect x="93.6" y="6" width="14.9" height="1.5" fill="#e3927a" opacity="0.8"/><rect x="111.1" y="0" width="16.9" height="8" rx="1" fill="#c9675c"/><rect x="112.1" y="6" width="14.9" height="1.5" fill="#e3927a" opacity="0.8"/><rect x="129.6" y="0" width="16.9" height="8" rx="1" fill="#c9675c"/><rect x="130.6" y="6" width="14.9" height="1.5" fill="#e3927a" opacity="0.8"/><rect x="148.1" y="0" width="16.9" height="8" rx="1" fill="#c9675c"/><rect x="149.1" y="6" width="14.9" height="1.5" fill="#e3927a" opacity="0.8"/></g><g transform="translate(434,998) rotate(17.82)"><rect x="0.0" y="0" width="18.3" height="8" rx="1" fill="#c9675c"/><rect x="1.0" y="6" width="16.3" height="1.5" fill="#e3927a" opacity="0.8"/><rect x="19.9" y="0" width="18.3" height="8" rx="1" fill="#c9675c"/><rect x="20.9" y="6" width="16.3" height="1.5" fill="#e3927a" opacity="0.8"/><rect x="39.7" y="0" width="18.3" height="8" rx="1" fill="#c9675c"/><rect x="40.7" y="6" width="16.3" height="1.5" fill="#e3927a" opacity="0.8"/><rect x="59.6" y="0" width="18.3" height="8" rx="1" fill="#c9675c"/><rect x="60.6" y="6" width="16.3" height="1.5" fill="#e3927a" opacity="0.8"/><rect x="79.5" y="0" width="18.3" height="8" rx="1" fill="#c9675c"/><rect x="80.5" y="6" width="16.3" height="1.5" fill="#e3927a" opacity="0.8"/><rect x="99.4" y="0" width="18.3" height="8" rx="1" fill="#c9675c"/><rect x="100.4" y="6" width="16.3" height="1.5" fill="#e3927a" opacity="0.8"/></g><g transform="translate(546,1036) rotate(0.00)"><rect x="0.0" y="0" width="16.8" height="8" rx="1" fill="#c9675c"/><rect x="1.0" y="6" width="14.8" height="1.5" fill="#e3927a" opacity="0.8"/><rect x="18.4" y="0" width="16.8" height="8" rx="1" fill="#c9675c"/><rect x="19.4" y="6" width="14.8" height="1.5" fill="#e3927a" opacity="0.8"/><rect x="36.8" y="0" width="16.8" height="8" rx="1" fill="#c9675c"/><rect x="37.8" y="6" width="14.8" height="1.5" fill="#e3927a" opacity="0.8"/><rect x="55.2" y="0" width="16.8" height="8" rx="1" fill="#c9675c"/><rect x="56.2" y="6" width="14.8" height="1.5" fill="#e3927a" opacity="0.8"/></g><g transform="translate(325,972) rotate(0.00)"><rect x="0.0" y="0" width="16.3" height="8" rx="1" fill="#c9675c"/><rect x="1.0" y="6" width="14.3" height="1.5" fill="#e3927a" opacity="0.8"/><rect x="17.9" y="0" width="16.3" height="8" rx="1" fill="#c9675c"/><rect x="18.9" y="6" width="14.3" height="1.5" fill="#e3927a" opacity="0.8"/><rect x="35.8" y="0" width="16.3" height="8" rx="1" fill="#c9675c"/><rect x="36.8" y="6" width="14.3" height="1.5" fill="#e3927a" opacity="0.8"/><rect x="53.7" y="0" width="16.3" height="8" rx="1" fill="#c9675c"/><rect x="54.7" y="6" width="14.3" height="1.5" fill="#e3927a" opacity="0.8"/></g><g transform="translate(509,913) rotate(0.00)"><rect x="0.0" y="0" width="16.8" height="8" rx="1" fill="#c9675c"/><rect x="1.0" y="6" width="14.8" height="1.5" fill="#e3927a" opacity="0.8"/><rect x="18.4" y="0" width="16.8" height="8" rx="1" fill="#c9675c"/><rect x="19.4" y="6" width="14.8" height="1.5" fill="#e3927a" opacity="0.8"/><rect x="36.8" y="0" width="16.8" height="8" rx="1" fill="#c9675c"/><rect x="37.8" y="6" width="14.8" height="1.5" fill="#e3927a" opacity="0.8"/><rect x="55.2" y="0" width="16.8" height="8" rx="1" fill="#c9675c"/><rect x="56.2" y="6" width="14.8" height="1.5" fill="#e3927a" opacity="0.8"/></g><rect x="695" y="886.0" width="8" height="14" rx="1" fill="#c9675c"/><rect x="695" y="901.5" width="8" height="14" rx="1" fill="#c9675c"/><rect x="695" y="917.0" width="8" height="14" rx="1" fill="#c9675c"/><rect x="695" y="932.5" width="8" height="14" rx="1" fill="#c9675c"/><rect x="695" y="948.0" width="8" height="14" rx="1" fill="#c9675c"/><rect x="695" y="963.5" width="8" height="14" rx="1" fill="#c9675c"/><rect x="695" y="979.0" width="8" height="14" rx="1" fill="#c9675c"/><rect x="330" y="982" width="11" height="6" fill="#6a55b8"/><rect x="344" y="982" width="11" height="6" fill="#6a55b8"/><rect x="382" y="982" width="11" height="6" fill="#6a55b8"/><rect x="330" y="990" width="11" height="6" fill="#6a55b8"/><rect x="382" y="990" width="11" height="6" fill="#6a55b8"/><rect x="263" y="1009" width="12" height="5" rx="1.5" fill="#8e3f45"/><rect x="276" y="1009" width="12" height="5" rx="1.5" fill="#8e3f45"/><rect x="289" y="1009" width="12" height="5" rx="1.5" fill="#8e3f45"/><rect x="302" y="1009" width="12" height="5" rx="1.5" fill="#8e3f45"/><rect x="315" y="1009" width="12" height="5" rx="1.5" fill="#8e3f45"/><rect x="328" y="1009" width="12" height="5" rx="1.5" fill="#8e3f45"/><rect x="274" y="1015" width="12" height="5" rx="1.5" fill="#8e3f45"/><rect x="287" y="1015" width="12" height="5" rx="1.5" fill="#8e3f45"/><rect x="300" y="1015" width="12" height="5" rx="1.5" fill="#8e3f45"/><rect x="313" y="1015" width="12" height="5" rx="1.5" fill="#8e3f45"/><rect x="326" y="1015" width="12" height="5" rx="1.5" fill="#8e3f45"/><rect x="263" y="1021" width="12" height="5" rx="1.5" fill="#8e3f45"/><rect x="276" y="1021" width="12" height="5" rx="1.5" fill="#8e3f45"/><rect x="289" y="1021" width="12" height="5" rx="1.5" fill="#8e3f45"/><rect x="302" y="1021" width="12" height="5" rx="1.5" fill="#8e3f45"/><rect x="315" y="1021" width="12" height="5" rx="1.5" fill="#8e3f45"/><rect x="328" y="1021" width="12" height="5" rx="1.5" fill="#8e3f45"/><rect x="289" y="1027" width="12" height="5" rx="1.5" fill="#8e3f45"/><rect x="302" y="1027" width="12" height="5" rx="1.5" fill="#8e3f45"/><rect x="315" y="1027" width="12" height="5" rx="1.5" fill="#8e3f45"/><rect x="328" y="1027" width="12" height="5" rx="1.5" fill="#8e3f45"/><rect x="442" y="1012" width="12" height="5" rx="1.5" fill="#8e3f45"/><rect x="436" y="1018" width="12" height="5" rx="1.5" fill="#8e3f45"/><rect x="449" y="1018" width="12" height="5" rx="1.5" fill="#8e3f45"/><rect x="462" y="1018" width="12" height="5" rx="1.5" fill="#8e3f45"/><rect x="442" y="1024" width="12" height="5" rx="1.5" fill="#8e3f45"/><rect x="455" y="1024" width="12" height="5" rx="1.5" fill="#8e3f45"/><rect x="468" y="1024" width="12" height="5" rx="1.5" fill="#8e3f45"/><rect x="436" y="1030" width="12" height="5" rx="1.5" fill="#8e3f45"/><rect x="449" y="1030" width="12" height="5" rx="1.5" fill="#8e3f45"/><rect x="462" y="1030" width="12" height="5" rx="1.5" fill="#8e3f45"/><rect x="475" y="1030" width="12" height="5" rx="1.5" fill="#8e3f45"/><rect x="488" y="1030" width="12" height="5" rx="1.5" fill="#8e3f45"/><rect x="442" y="1036" width="12" height="5" rx="1.5" fill="#8e3f45"/><rect x="455" y="1036" width="12" height="5" rx="1.5" fill="#8e3f45"/><rect x="468" y="1036" width="12" height="5" rx="1.5" fill="#8e3f45"/><rect x="481" y="1036" width="12" height="5" rx="1.5" fill="#8e3f45"/><rect x="494" y="1036" width="12" height="5" rx="1.5" fill="#8e3f45"/><rect x="507" y="1036" width="12" height="5" rx="1.5" fill="#8e3f45"/><rect x="440" y="1042" width="12" height="5" rx="1.5" fill="#8e3f45"/><rect x="453" y="1042" width="12" height="5" rx="1.5" fill="#8e3f45"/><rect x="466" y="1042" width="12" height="5" rx="1.5" fill="#8e3f45"/><rect x="479" y="1042" width="12" height="5" rx="1.5" fill="#8e3f45"/><rect x="492" y="1042" width="12" height="5" rx="1.5" fill="#8e3f45"/><rect x="505" y="1042" width="12" height="5" rx="1.5" fill="#8e3f45"/><rect x="518" y="1042" width="12" height="5" rx="1.5" fill="#8e3f45"/><rect x="531" y="1042" width="12" height="5" rx="1.5" fill="#8e3f45"/><rect x="450" y="1048" width="12" height="5" rx="1.5" fill="#8e3f45"/><rect x="463" y="1048" width="12" height="5" rx="1.5" fill="#8e3f45"/><rect x="476" y="1048" width="12" height="5" rx="1.5" fill="#8e3f45"/><rect x="489" y="1048" width="12" height="5" rx="1.5" fill="#8e3f45"/><rect x="502" y="1048" width="12" height="5" rx="1.5" fill="#8e3f45"/><rect x="515" y="1048" width="12" height="5" rx="1.5" fill="#8e3f45"/><rect x="528" y="1048" width="12" height="5" rx="1.5" fill="#8e3f45"/><rect x="448" y="1054" width="12" height="5" rx="1.5" fill="#8e3f45"/><rect x="461" y="1054" width="12" height="5" rx="1.5" fill="#8e3f45"/><rect x="474" y="1054" width="12" height="5" rx="1.5" fill="#8e3f45"/><rect x="487" y="1054" width="12" height="5" rx="1.5" fill="#8e3f45"/><rect x="500" y="1054" width="12" height="5" rx="1.5" fill="#8e3f45"/><rect x="513" y="1054" width="12" height="5" rx="1.5" fill="#8e3f45"/><rect x="458" y="1060" width="12" height="5" rx="1.5" fill="#8e3f45"/><rect x="471" y="1060" width="12" height="5" rx="1.5" fill="#8e3f45"/><rect x="484" y="1060" width="12" height="5" rx="1.5" fill="#8e3f45"/><rect x="497" y="1060" width="12" height="5" rx="1.5" fill="#8e3f45"/><rect x="510" y="1060" width="12" height="5" rx="1.5" fill="#8e3f45"/><rect x="456" y="1066" width="12" height="5" rx="1.5" fill="#8e3f45"/><rect x="469" y="1066" width="12" height="5" rx="1.5" fill="#8e3f45"/><rect x="482" y="1066" width="12" height="5" rx="1.5" fill="#8e3f45"/><rect x="495" y="1066" width="12" height="5" rx="1.5" fill="#8e3f45"/><rect x="330" y="853" width="12" height="5" rx="1.5" fill="#8e3f45"/><rect x="345" y="860" width="12" height="5" rx="1.5" fill="#8e3f45"/><rect x="352" y="866" width="12" height="5" rx="1.5" fill="#8e3f45"/><rect x="338" y="872" width="12" height="5" rx="1.5" fill="#8e3f45"/><rect x="374" y="1028" width="12" height="5" rx="1.5" fill="#8e3f45"/><rect x="388" y="1020" width="12" height="5" rx="1.5" fill="#8e3f45"/><rect x="378" y="1010" width="12" height="5" rx="1.5" fill="#8e3f45"/><rect x="257" y="904" width="52" height="52" fill="#4a5590"/><rect x="317" y="904" width="52" height="52" fill="#4a5590"/><rect x="376" y="904" width="52" height="52" fill="#4a5590"/><rect x="436" y="904" width="52" height="52" fill="#4a5590"/><circle cx="297" cy="988" r="7" fill="#a88040"/><circle cx="312" cy="988" r="7" fill="#a88040"/><rect x="395" y="970" width="17" height="12" rx="4" fill="#e0a030"/><rect x="396" y="974" width="15" height="3" fill="#6ab040"/><rect x="613" y="810" width="67" height="68" fill="rgba(150,150,150,0.93)"/><rect x="553" y="887" width="187" height="162" fill="rgba(146,146,146,0.86)"/><path d="M614 917 V905 L621 897 L628 905 V917Z" fill="rgba(40,60,80,0.35)"/><rect x="617" y="905" width="8" height="12" fill="rgba(80,180,170,0.5)"/><path d="M645 914 H670 V928 Q658 942 645 928Z" fill="rgba(100,130,170,0.45)" stroke="rgba(200,150,60,0.8)" stroke-width="1.6"/><path d="M640 992 V968 Q656 950 672 968 V992Z" fill="rgba(20,20,30,0.45)"/><rect x="614" y="963" width="8" height="26" fill="rgba(230,230,220,0.6)"/><rect x="685" y="968" width="6" height="15" fill="rgba(210,80,70,0.55)"/></g></svg>
<svg style="left:973px;top:700px" width="16" height="12" viewBox="0 0 16 12"><path d="M0 0 H6 L8 2 H16 V12 H0Z" fill="#c8c8c8"/></svg>
<div class="t" style="left:993px;top:697px;font-size:15px;line-height:17px;letter-spacing:0.93px;color:#c8c8c8">Project</div>
<svg style="left:1392px;top:699px" width="11" height="12" viewBox="0 0 11 12"><rect x="0.7" y="5.7" width="9.6" height="5.6" fill="none" stroke="#d0d0d0" stroke-width="1.3"/><path d="M2.8 5.5 V3.2 Q2.8 0.7 5.5 0.7 Q8.2 0.7 8.2 3" fill="none" stroke="#d0d0d0" stroke-width="1.3"/></svg>
<div class="a" style="left:1417px;top:699px;width:3px;height:3px;border-radius:2px;background:#d8d8d8"></div><div class="a" style="left:1417px;top:703px;width:3px;height:3px;border-radius:2px;background:#d8d8d8"></div><div class="a" style="left:1417px;top:707px;width:3px;height:3px;border-radius:2px;background:#d8d8d8"></div>
<div class="a" style="left:961px;top:719px;width:474px;height:1px;background:#232323"></div>
<svg style="left:969px;top:724px" width="16" height="15" viewBox="0 0 16 15"><path d="M8 0 V15 M0.5 7.5 H15.5" stroke="#d8d8d8" stroke-width="1.6"/></svg>
<svg style="left:989px;top:729px" width="10" height="6" viewBox="0 0 10 6"><polygon points="0,0 10,0 5,6" fill="#c4c4c4"/></svg>
<div class="a" style="left:1017px;top:722px;width:232px;height:20px;background:#2a2a2a;border-radius:5px;border:1px solid #212121"></div>
<svg style="left:1021px;top:727px" width="10" height="10" viewBox="0 0 10 10"><circle cx="4" cy="4" r="3" fill="none" stroke="#c4c4c4" stroke-width="1.3"/><path d="M6.2 6.2 L9 9" stroke="#c4c4c4" stroke-width="1.6"/></svg>
<div class="a" style="left:1228px;top:723px;width:20px;height:18px;background:#3a3a3a;border-radius:0 4px 4px 0"></div>
<svg style="left:1230px;top:725px" width="15" height="14" viewBox="0 0 16 15"><rect x="4.5" y="0.7" width="10.5" height="10.5" fill="none" stroke="#c4c4c4" stroke-width="1.2"/><rect x="0.7" y="9.5" width="5" height="5" fill="#3a3a3a" stroke="#c4c4c4" stroke-width="1.2"/><path d="M6 9 L12.5 3 M8.5 3 H12.5 V7" fill="none" stroke="#c4c4c4" stroke-width="1.2"/></svg>
<div class="a" style="left:1253px;top:720px;width:1px;height:25px;background:#262626"></div>
<div class="a" style="left:1286px;top:720px;width:1px;height:25px;background:#262626"></div>
<div class="a" style="left:1318px;top:720px;width:1px;height:25px;background:#262626"></div>
<div class="a" style="left:1351px;top:720px;width:1px;height:25px;background:#262626"></div>
<div class="a" style="left:1383px;top:720px;width:1px;height:25px;background:#262626"></div>
<svg style="left:1262px;top:723px" width="16" height="16" viewBox="0 0 16 16"><rect x="2" y="1" width="6" height="7" fill="#d0d0d0"/><circle cx="5" cy="12" r="4" fill="#d0d0d0"/><polygon points="12,6 16,13 8,13" fill="#d0d0d0"/></svg>
<svg style="left:1294px;top:724px" width="15" height="15" viewBox="0 0 15 15"><path d="M8 0.5 H14.5 V7 L7 14.5 L0.5 8Z" fill="#d0d0d0"/><circle cx="11" cy="4" r="1.3" fill="#3c3c3c"/></svg>
<svg style="left:1326px;top:723px" width="17" height="17" viewBox="0 0 17 17"><circle cx="8.5" cy="8.5" r="8" fill="#d8d8d8"/><rect x="7.3" y="3.5" width="2.4" height="7" fill="#3c3c3c"/><circle cx="8.5" cy="13" r="1.3" fill="#3c3c3c"/></svg>
<svg style="left:1359px;top:724px" width="16" height="15" viewBox="0 0 16 15"><polygon points="8,0.5 10.2,5.2 15.5,5.6 11.5,9.2 12.7,14.5 8,11.8 3.3,14.5 4.5,9.2 0.5,5.6 5.8,5.2" fill="#a8a8a8"/></svg>
<svg style="left:1391px;top:726px" width="19" height="11" viewBox="0 0 19 11"><path d="M1 5.5 Q9.5 -3 18 5.5 Q9.5 14 1 5.5Z" fill="#5a5a5a" stroke="#6a6a6a" stroke-width="1"/><circle cx="9.5" cy="5.5" r="3" fill="#7a7a7a"/></svg>
<div class="t" style="left:1412px;top:724px;font-size:15px;line-height:17px;letter-spacing:0.3px;color:#c0c0c0">31</div>
<div class="a" style="left:1220px;top:745px;width:1px;height:369px;background:#232323"></div>
<div class="a" style="left:1221px;top:745px;width:214px;height:25px;background:#3e3e3e"></div>
<div class="a" style="left:961px;top:944px;width:259px;height:20px;background:#4b4b4b"></div>
<svg style="left:966px;top:750px" width="10" height="9" viewBox="0 0 10 9"><polygon points="0,0 10,0 5,9" fill="#7e7e7e"/></svg>
<svg style="left:984px;top:746px" width="15" height="15" viewBox="0 0 16 15"><polygon points="8,0.5 10.2,5.2 15.5,5.6 11.5,9.2 12.7,14.5 8,11.8 3.3,14.5 4.5,9.2 0.5,5.6 5.8,5.2" fill="#d0d0d0"/></svg>
<div class="t b" style="left:1005px;top:746px;font-size:15px;line-height:17px;letter-spacing:0.51px;color:#d8d8d8">Favorites</div>
<svg style="left:1001px;top:767px" width="15" height="15" viewBox="0 0 15 15"><circle cx="6" cy="6" r="4.8" fill="none" stroke="#c4c4c4" stroke-width="1.6"/><path d="M9.5 9.5 L14 14" stroke="#c4c4c4" stroke-width="2"/></svg>
<div class="t" style="left:1021px;top:766px;font-size:15px;line-height:17px;letter-spacing:0.4px;color:#c8c8c8">All Materials</div>
<svg style="left:1001px;top:787px" width="15" height="15" viewBox="0 0 15 15"><circle cx="6" cy="6" r="4.8" fill="none" stroke="#c4c4c4" stroke-width="1.6"/><path d="M9.5 9.5 L14 14" stroke="#c4c4c4" stroke-width="2"/></svg>
<div class="t" style="left:1021px;top:786px;font-size:15px;line-height:17px;letter-spacing:0.55px;color:#c8c8c8">All Models</div>
<svg style="left:1001px;top:807px" width="15" height="15" viewBox="0 0 15 15"><circle cx="6" cy="6" r="4.8" fill="none" stroke="#c4c4c4" stroke-width="1.6"/><path d="M9.5 9.5 L14 14" stroke="#c4c4c4" stroke-width="2"/></svg>
<div class="t" style="left:1021px;top:806px;font-size:15px;line-height:17px;letter-spacing:0.55px;color:#c8c8c8">All Prefabs</div>
<svg style="left:966px;top:849px" width="10" height="9" viewBox="0 0 10 9"><polygon points="0,0 10,0 5,9" fill="#7e7e7e"/></svg>
<svg style="left:983px;top:846px" width="18" height="14" viewBox="0 0 18 14"><path d="M0.7 13 V0.7 H6 L7.8 2.5 H14 V5" fill="none" stroke="#d0d0d0" stroke-width="1.3"/><path d="M0.7 13 L3.5 5.5 H17.5 L14.5 13Z" fill="#d0d0d0"/></svg>
<div class="t b" style="left:1005px;top:845px;font-size:15px;line-height:17px;letter-spacing:0.3px;color:#d8d8d8">Assets</div>
<svg style="left:985px;top:868px" width="9" height="10" viewBox="0 0 9 10"><polygon points="0,0 9,5 0,10" fill="#7e7e7e"/></svg>
<svg style="left:1000px;top:867px" width="16" height="13" viewBox="0 0 16 13"><path d="M0 0 H6 L8 2 H16 V13 H0Z" fill="#d0d0d0"/></svg>
<div class="t" style="left:1021px;top:865px;width:199px;overflow:hidden;font-size:15px;line-height:17px;letter-spacing:0.55px;color:#c8c8c8">Medieval_pixel_art_asset_FR</div>
<svg style="left:1000px;top:887px" width="16" height="13" viewBox="0 0 16 13"><path d="M0 0 H6 L8 2 H16 V13 H0Z" fill="#d0d0d0"/></svg>
<div class="t" style="left:1021px;top:885px;font-size:15px;line-height:17px;letter-spacing:0.55px;color:#c8c8c8">Objectes</div>
<svg style="left:1000px;top:907px" width="16" height="13" viewBox="0 0 16 13"><path d="M0.7 0.7 H6 L7.8 2.5 H15.3 V12.3 H0.7Z" fill="none" stroke="#c8c8c8" stroke-width="1.3"/><path d="M0.7 4 H15.3" stroke="#c8c8c8" stroke-width="1.1"/></svg>
<div class="t" style="left:1021px;top:905px;font-size:15px;line-height:17px;letter-spacing:0.55px;color:#c8c8c8">Prefabs</div>
<svg style="left:1000px;top:927px" width="16" height="13" viewBox="0 0 16 13"><path d="M0 0 H6 L8 2 H16 V13 H0Z" fill="#d0d0d0"/></svg>
<div class="t" style="left:1021px;top:925px;font-size:15px;line-height:17px;letter-spacing:0.55px;color:#c8c8c8">Scenes</div>
<svg style="left:1000px;top:947px" width="16" height="13" viewBox="0 0 16 13"><path d="M0 0 H6 L8 2 H16 V13 H0Z" fill="#d0d0d0"/></svg>
<div class="t" style="left:1021px;top:945px;font-size:15px;line-height:17px;letter-spacing:0.55px;color:#c8c8c8">Scripts</div>
<svg style="left:985px;top:968px" width="9" height="10" viewBox="0 0 9 10"><polygon points="0,0 9,5 0,10" fill="#7e7e7e"/></svg>
<svg style="left:1000px;top:967px" width="16" height="13" viewBox="0 0 16 13"><path d="M0 0 H6 L8 2 H16 V13 H0Z" fill="#d0d0d0"/></svg>
<div class="t" style="left:1021px;top:965px;font-size:15px;line-height:17px;letter-spacing:0.55px;color:#c8c8c8">Settings</div>
<svg style="left:985px;top:988px" width="9" height="10" viewBox="0 0 9 10"><polygon points="0,0 9,5 0,10" fill="#7e7e7e"/></svg>
<svg style="left:1000px;top:987px" width="16" height="13" viewBox="0 0 16 13"><path d="M0 0 H6 L8 2 H16 V13 H0Z" fill="#d0d0d0"/></svg>
<div class="t" style="left:1021px;top:985px;font-size:15px;line-height:17px;letter-spacing:0.55px;color:#c8c8c8">TextMesh Pro</div>
<svg style="left:985px;top:1008px" width="9" height="10" viewBox="0 0 9 10"><polygon points="0,0 9,5 0,10" fill="#7e7e7e"/></svg>
<svg style="left:1000px;top:1007px" width="16" height="13" viewBox="0 0 16 13"><path d="M0 0 H6 L8 2 H16 V13 H0Z" fill="#d0d0d0"/></svg>
<div class="t" style="left:1021px;top:1005px;font-size:15px;line-height:17px;letter-spacing:0.55px;color:#c8c8c8">Wizard - 2D Character</div>
<div class="a" style="left:1219px;top:860px;width:1px;height:30px;background:#383838"></div>
<svg style="left:966px;top:1028px" width="9" height="10" viewBox="0 0 9 10"><polygon points="0,0 9,5 0,10" fill="#7e7e7e"/></svg>
<svg style="left:983px;top:1027px" width="16" height="13" viewBox="0 0 16 13"><path d="M0 0 H6 L8 2 H16 V13 H0Z" fill="#d0d0d0"/></svg>
<div class="t b" style="left:1005px;top:1025px;font-size:15px;line-height:17px;letter-spacing:0.57px;color:#d8d8d8">Packages</div>
<div class="t" style="left:1226px;top:749px;font-size:15px;line-height:17px;letter-spacing:0.4px;color:#aaaaaa">Assets</div>
<svg style="left:1283px;top:752px" width="7" height="11" viewBox="0 0 7 11"><path d="M1 1 L6 5.5 L1 10" fill="none" stroke="#aaaaaa" stroke-width="1.4"/></svg>
<div class="t b" style="left:1296px;top:749px;font-size:15px;line-height:17px;letter-spacing:0.3px;color:#d8d8d8">Scripts</div>
<svg style="left:1244px;top:774px" width="14" height="16" viewBox="0 0 12 14"><path d="M0 0 H8.5 L12 3.5 V14 H0Z" fill="#e8e8e8"/><path d="M4.3 3 L3.5 11.5 M7.8 3 L7 11.5 M2 5.5 H10 M1.6 8.8 H9.6" stroke="#3a8a3a" stroke-width="1.2"/></svg>
<div class="t" style="left:1263px;top:774px;font-size:15px;line-height:17px;letter-spacing:0.66px;color:#c8c8c8">InventoryManager</div>
<svg style="left:1244px;top:794px" width="14" height="16" viewBox="0 0 12 14"><path d="M0 0 H8.5 L12 3.5 V14 H0Z" fill="#e8e8e8"/><path d="M4.3 3 L3.5 11.5 M7.8 3 L7 11.5 M2 5.5 H10 M1.6 8.8 H9.6" stroke="#3a8a3a" stroke-width="1.2"/></svg>
<div class="t" style="left:1263px;top:794px;font-size:15px;line-height:17px;letter-spacing:0.55px;color:#c8c8c8">Item</div>
<svg style="left:1244px;top:814px" width="14" height="16" viewBox="0 0 12 14"><path d="M0 0 H8.5 L12 3.5 V14 H0Z" fill="#e8e8e8"/><path d="M4.3 3 L3.5 11.5 M7.8 3 L7 11.5 M2 5.5 H10 M1.6 8.8 H9.6" stroke="#3a8a3a" stroke-width="1.2"/></svg>
<div class="t" style="left:1263px;top:814px;font-size:15px;line-height:17px;letter-spacing:0.55px;color:#c8c8c8">ItemSlot</div>
<div class="a" style="left:1221px;top:1088px;width:214px;height:26px;background:#3c3c3c;border-top:1px solid #333"></div>
<div class="a" style="left:1355px;top:1099px;width:60px;height:3px;background:#5a5a5a;border-radius:2px"></div>
<div class="a" style="left:1346px;top:1095px;width:12px;height:12px;background:#9a9a9a;border-radius:6px"></div>
<div class="a" style="left:0;top:1114px;width:1913px;height:22px;background:#151515;border-top:1px solid #3a3a3a"></div>
<div class="a" style="left:1437px;top:1106px;width:476px;height:8px;background:#3c3c3c"></div>
<svg style="left:1828px;top:1121px" width="19" height="16" viewBox="0 0 19 16"><ellipse cx="9.5" cy="10" rx="6" ry="7" fill="#d0d0d0"/><circle cx="9.5" cy="3.5" r="3" fill="#d0d0d0"/><path d="M3 5 L1 2 M16 5 L18 2 M3 13 L1 16 M16 13 L18 16" stroke="#d0d0d0" stroke-width="1.5"/><path d="M1 0 L17 16" stroke="#151515" stroke-width="2"/></svg>
<svg style="left:1862px;top:1121px" width="17" height="16" viewBox="0 0 17 16"><ellipse cx="8.5" cy="3" rx="7.5" ry="3" fill="#d0d0d0"/><path d="M1 5 V8 Q8.5 12 16 8 V5 Q8.5 9 1 5Z M1 10 V13 Q8.5 17 16 13 V10 Q8.5 14 1 10Z" fill="#d0d0d0"/><path d="M1 0 L16 16" stroke="#151515" stroke-width="2"/></svg>
<svg style="left:1893px;top:1121px" width="19" height="16" viewBox="0 0 19 19"><circle cx="9.5" cy="9.5" r="8.5" fill="none" stroke="#c4c4c4" stroke-width="1.4"/><path d="M5.5 10 L8.5 13 L13.5 7" fill="none" stroke="#c4c4c4" stroke-width="1.6"/></svg>
<!-- status bar -->
<div class="a" style="left:0;top:1136px;width:1913px;height:3px;background:#4a4a4a"></div>
<!-- annotation arrows -->
<svg style="left:0;top:0;pointer-events:none" width="1913" height="1139"><line x1="1151" y1="180" x2="1056.3" y2="247.5" stroke="#f2f2f2" stroke-width="1.6"/><polygon points="1046.5,254.5 1053.8,244.1 1058.7,251.0" fill="#f2f2f2"/><line x1="1295" y1="237.2" x2="1495.9" y2="319.4" stroke="#f2f2f2" stroke-width="1.6"/><polygon points="1507,323.9 1494.3,323.2 1497.5,315.5" fill="#f2f2f2"/><line x1="1735" y1="246" x2="1879.9" y2="391.7" stroke="#f2f2f2" stroke-width="1.6"/><polygon points="1888.4,400.2 1877.0,394.7 1882.9,388.7" fill="#f2f2f2"/><line x1="1072.4" y1="325.4" x2="1618.7" y2="430.0" stroke="#f2f2f2" stroke-width="1.6"/><polygon points="1630.5,432.3 1617.9,434.2 1619.5,425.9" fill="#f2f2f2"/><line x1="1097.2" y1="409.4" x2="1621.1" y2="460.5" stroke="#f2f2f2" stroke-width="1.6"/><polygon points="1633,461.7 1620.6,464.7 1621.5,456.4" fill="#f2f2f2"/><line x1="1100.4" y1="427.3" x2="1612.5" y2="493.6" stroke="#f2f2f2" stroke-width="1.6"/><polygon points="1624.4,495.1 1612.0,497.7 1613.0,489.4" fill="#f2f2f2"/><line x1="1097.2" y1="450" x2="1612.4" y2="515.9" stroke="#f2f2f2" stroke-width="1.6"/><polygon points="1624.3,517.4 1611.9,520.0 1612.9,511.7" fill="#f2f2f2"/></svg>
</body></html>
